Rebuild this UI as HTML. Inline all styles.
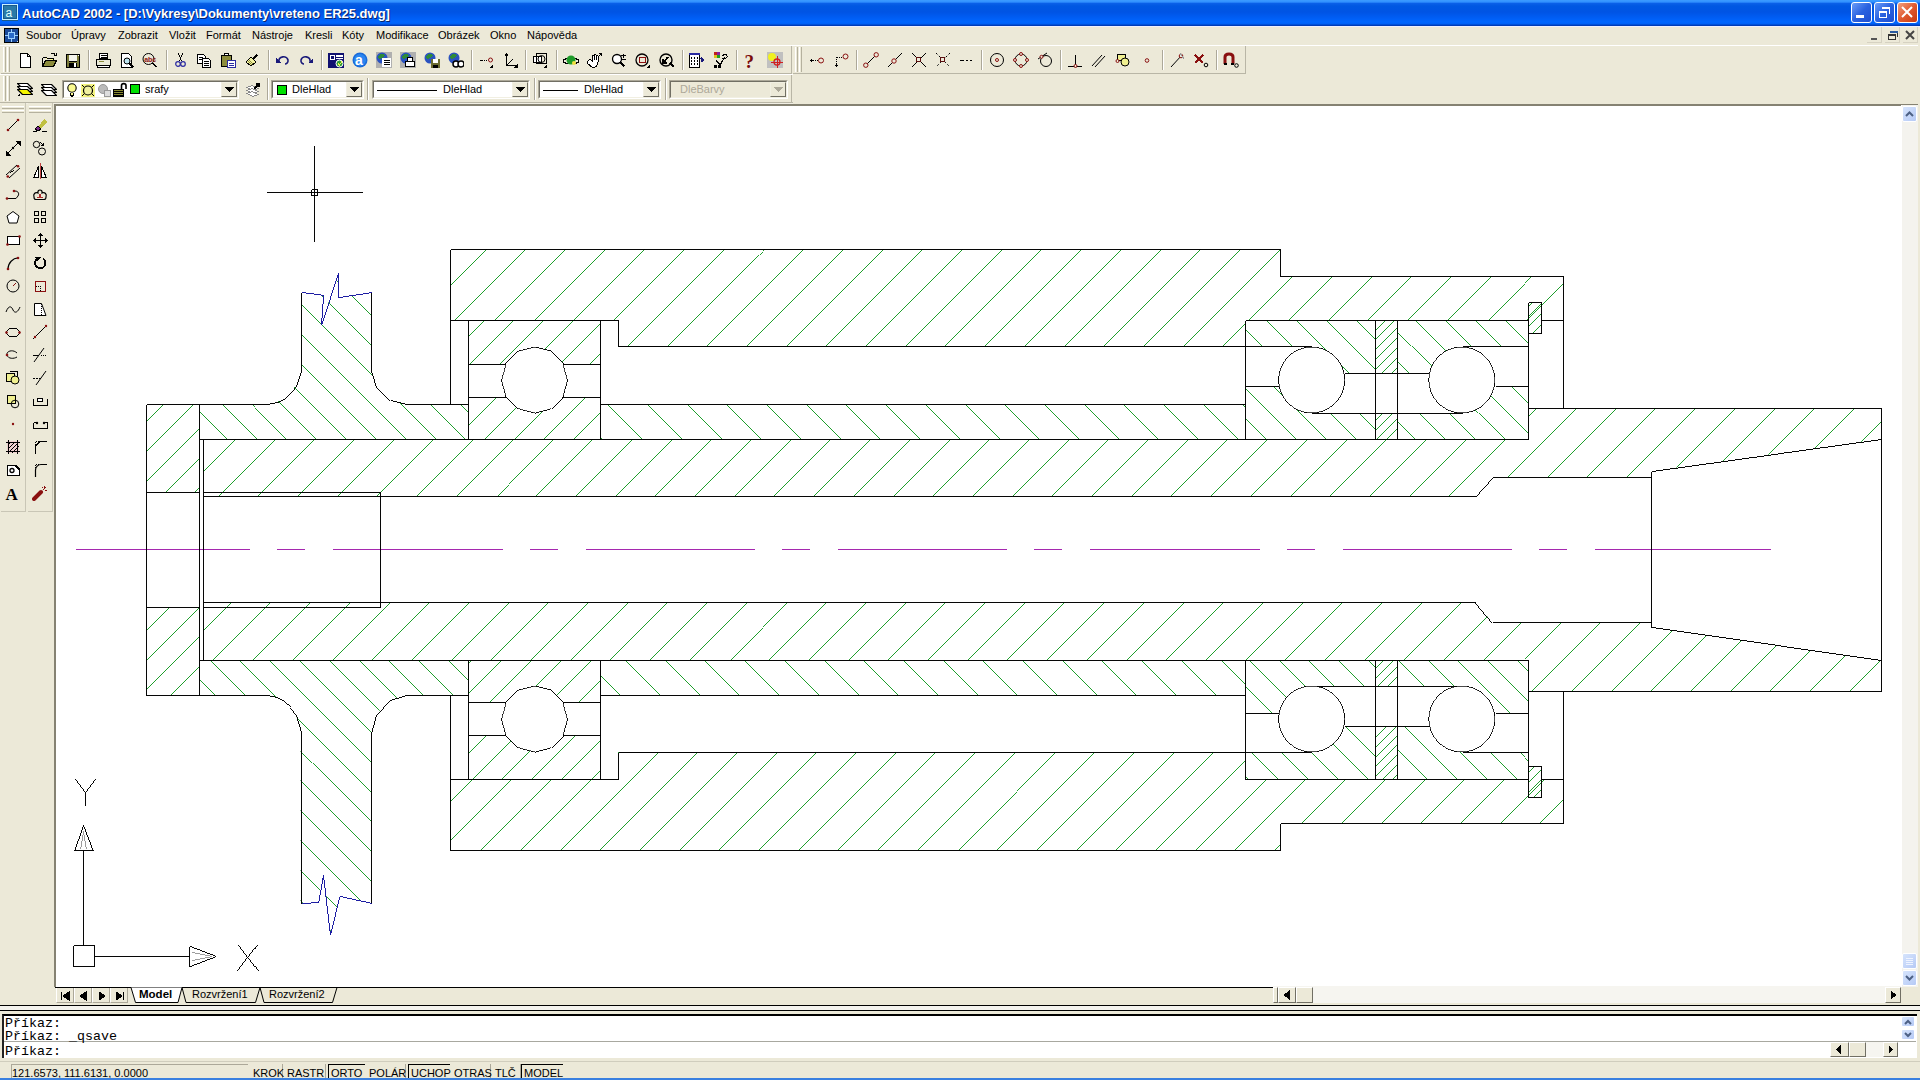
<!DOCTYPE html><html><head><meta charset="utf-8"><style>
*{margin:0;padding:0;box-sizing:border-box}
html,body{width:1920px;height:1080px;overflow:hidden;background:#ece9d8;font-family:"Liberation Sans",sans-serif;position:relative}
.a{position:absolute}
#title{left:0;top:0;width:1920px;height:26px;background:linear-gradient(#3d9cff 0,#3090ff 2px,#0a60e8 3.5px,#0058e2 6px,#0054e4 12px,#005cf2 17px,#0066ff 22px,#0060f4 24px,#0040c0 25px,#0038b0 26px)}
#title .t{left:22px;top:6px;color:#fff;font-weight:bold;font-size:13px;letter-spacing:0px;white-space:nowrap;text-shadow:1px 1px 0 #0a246a}
.mi{top:29px;font-size:11px;color:#000;white-space:nowrap}
.tb{background:#ece9d8}
.sep{width:1px;border-left:1px solid #aca899;border-right:1px solid #fff}
.combo{background:#fff;border:1px solid #7f9db9}
.dd{background:#ece9d8;border-left:1px solid #fff;border-top:1px solid #fff;border-right:1px solid #716f64;border-bottom:1px solid #716f64}
.cmd{font-family:"Liberation Mono",monospace;font-size:13.33px;color:#000;white-space:pre;left:5px}
.sb{top:1065px;height:14px;font-size:11px;color:#000;white-space:nowrap}
</style></head><body><div class="a" style="left:0;top:26px;width:1920px;height:1px;background:#eef0ff"></div><div id="title" class="a"><div class="t a">AutoCAD 2002 - [D:\Vykresy\Dokumenty\vreteno ER25.dwg]</div></div><div class="mi a" style="left:26px">Soubor</div><div class="mi a" style="left:71px">Úpravy</div><div class="mi a" style="left:118px">Zobrazit</div><div class="mi a" style="left:169px">Vložit</div><div class="mi a" style="left:206px">Formát</div><div class="mi a" style="left:252px">Nástroje</div><div class="mi a" style="left:305px">Kresli</div><div class="mi a" style="left:342px">Kóty</div><div class="mi a" style="left:376px">Modifikace</div><div class="mi a" style="left:438px">Obrázek</div><div class="mi a" style="left:490px">Okno</div><div class="mi a" style="left:527px">Nápověda</div><div class="a" style="left:54px;top:104px;width:1866px;height:2px;background:#858272"></div><div class="a" style="left:54px;top:104px;width:2px;height:883px;background:#858272"></div><div class="a" style="left:56px;top:106px;width:1845px;height:881px;background:#fff"></div><div class="a" style="left:0;top:45px;width:1920px;height:1px;background:#fff"></div><div class="a tb" style="left:1px;top:46px;width:791px;height:28px;border-bottom:1px solid #b9b6a6;border-right:1px solid #b9b6a6"></div><div class="a" style="left:3px;top:47px;width:3px;height:25px;border-left:1px solid #fff;border-right:1px solid #b5b19e"></div><div class="a" style="left:7px;top:47px;width:3px;height:25px;border-left:1px solid #fff;border-right:1px solid #b5b19e"></div><svg class="a" style="left:17px;top:52px" width="16" height="16" viewBox="0 0 16 16" shape-rendering="crispEdges"><path d="M3.5 1.5H10.5L13.5 4.5V15.5H3.5Z" stroke="#000" fill="#fff" stroke-width="1" /><path d="M10.5 1.5V4.5H13.5" stroke="#000" fill="none" stroke-width="1" /></svg><svg class="a" style="left:41px;top:52px" width="16" height="16" viewBox="0 0 16 16" shape-rendering="crispEdges"><path d="M1.5 5.5H5.5L6.5 6.5H12.5V8.5" stroke="#000" fill="#ffff99" stroke-width="1" /><path d="M1.5 5.5V14.5H12.5L15.5 8.5H4.5L1.5 14.5" stroke="#000" fill="#8c8c3c" stroke-width="1" /><path d="M9.5 2.5C10.5 0.5 13.5 0.5 14.5 3.5" stroke="#000" fill="none" stroke-width="1" /><path d="M13 3.5H15.5V1" stroke="#000" fill="none" stroke-width="1" /></svg><svg class="a" style="left:65px;top:52px" width="16" height="16" viewBox="0 0 16 16" shape-rendering="crispEdges"><rect x="1" y="2" width="14" height="14" fill="#000"/><rect x="2" y="3" width="12" height="12" fill="#7a7a3a"/><rect x="4" y="3" width="8" height="6" fill="#f4f4ec"/><rect x="4" y="9" width="8" height="1" fill="#000"/><rect x="4" y="11" width="8" height="4" fill="#000"/><rect x="9" y="11" width="2" height="4" fill="#fff"/><rect x="13" y="3" width="1" height="1" fill="#fff"/></svg><div class="a" style="left:88px;top:50px;width:2px;height:20px;border-left:1px solid #aca899;border-right:1px solid #fff"></div><svg class="a" style="left:95px;top:52px" width="16" height="16" viewBox="0 0 16 16" shape-rendering="crispEdges"><path d="M4.5 1.5H12.5V6.5H4.5Z" stroke="#000" fill="#fff" stroke-width="1" /><path d="M1.5 7.5H15.5V13.5H1.5Z" stroke="#000" fill="#ebebd8" stroke-width="1" /><path d="M2.5 13.5V15.5H14.5V13.5" stroke="#000" fill="#fff" stroke-width="1" /><path d="M3.5 9.5H8.5" stroke="#8c8c3c" fill="none" stroke-width="1" /><path d="M5.5 3.5H11.5M5.5 5H11.5" stroke="#000" fill="none" stroke-width="1" /></svg><svg class="a" style="left:119px;top:52px" width="16" height="16" viewBox="0 0 16 16" shape-rendering="crispEdges"><path d="M2.5 1.5H9.5L12.5 4.5V15.5H2.5Z" stroke="#000" fill="#fff" stroke-width="1" /><circle cx="8" cy="9" r="3" stroke="#000" fill="#bfe6f0" stroke-width="1" shape-rendering="auto"/><path d="M10.5 11.5L14.5 15.5" stroke="#000" fill="none" stroke-width="1.5" /></svg><svg class="a" style="left:142px;top:52px" width="16" height="16" viewBox="0 0 16 16" shape-rendering="crispEdges"><circle cx="6.5" cy="7" r="5.5" stroke="#000" fill="none" stroke-width="1" shape-rendering="auto"/><text x="2.2" y="9.5" font-size="7" font-family="Liberation Sans" font-weight="bold" fill="#8a1010">abc</text><path d="M10.5 11L14.5 15" stroke="#000" fill="none" stroke-width="2" /></svg><div class="a" style="left:166px;top:50px;width:2px;height:20px;border-left:1px solid #aca899;border-right:1px solid #fff"></div><svg class="a" style="left:172px;top:52px" width="16" height="16" viewBox="0 0 16 16" shape-rendering="crispEdges"><path d="M6.5 1.5L9.5 9M10.5 1.5L7.5 9" stroke="#000" fill="none" stroke-width="1" /><circle cx="6" cy="12" r="2.3" stroke="#2a2aa0" fill="none" stroke-width="1.2" shape-rendering="auto"/><circle cx="11" cy="12" r="2.3" stroke="#2a2aa0" fill="none" stroke-width="1.2" shape-rendering="auto"/></svg><svg class="a" style="left:196px;top:52px" width="16" height="16" viewBox="0 0 16 16" shape-rendering="crispEdges"><path d="M1.5 2.5H7.5L9.5 4.5V11.5H1.5Z" stroke="#000" fill="#fff" stroke-width="1" /><path d="M6.5 6.5H12.5L14.5 8.5V15.5H6.5Z" stroke="#000" fill="#fff" stroke-width="1" /><path d="M3 5.5H7M3 7.5H7M8 9.5H13M8 11.5H13M8 13.5H13" stroke="#000" fill="none" stroke-width="1" /></svg><svg class="a" style="left:220px;top:52px" width="16" height="16" viewBox="0 0 16 16" shape-rendering="crispEdges"><rect x="1" y="3" width="11" height="12" fill="#8c8c3c"/><path d="M1.5 3.5H11.5V14.5H1.5Z" stroke="#000" fill="none" stroke-width="1" /><rect x="4" y="1" width="5" height="3" fill="#fff"/><path d="M4.5 1.5H8.5V3.5H4.5Z" stroke="#000" fill="none" stroke-width="1" /><path d="M7.5 8.5H15.5V15.5H7.5Z" stroke="#2a2aa0" fill="#fff" stroke-width="1" /><path d="M9 11.5H14M9 13.5H14" stroke="#2a2aa0" fill="none" stroke-width="1" /></svg><svg class="a" style="left:244px;top:52px" width="16" height="16" viewBox="0 0 16 16" shape-rendering="crispEdges"><path d="M2 10L7 5L12 10L7 14Z" stroke="#000" fill="#f0f0a0" stroke-width="1" /><path d="M9 7L13 3" stroke="#000" fill="none" stroke-width="2.5" /><path d="M4 9L8 13M5 8L9 12" stroke="#8c8c3c" fill="none" stroke-width="1" /></svg><div class="a" style="left:268px;top:50px;width:2px;height:20px;border-left:1px solid #aca899;border-right:1px solid #fff"></div><svg class="a" style="left:275px;top:52px" width="16" height="16" viewBox="0 0 16 16" shape-rendering="crispEdges"><path d="M4 10C3 4 12 3 13 8C13.5 11 11 12 10 12" stroke="#1a1a7a" fill="none" stroke-width="1.6" shape-rendering="auto"/><path d="M1 6V11H6Z" stroke="none" fill="#1a1a7a" stroke-width="1" /></svg><svg class="a" style="left:298px;top:52px" width="16" height="16" viewBox="0 0 16 16" shape-rendering="crispEdges"><path d="M12 10C13 4 4 3 3 8C2.5 11 5 12 6 12" stroke="#1a1a7a" fill="none" stroke-width="1.6" shape-rendering="auto"/><path d="M15 6V11H10Z" stroke="none" fill="#1a1a7a" stroke-width="1" /></svg><div class="a" style="left:321px;top:50px;width:2px;height:20px;border-left:1px solid #aca899;border-right:1px solid #fff"></div><svg class="a" style="left:328px;top:52px" width="16" height="16" viewBox="0 0 16 16" shape-rendering="crispEdges"><rect x="0" y="1" width="16" height="15" fill="#101070"/><rect x="2" y="3" width="5" height="5" fill="#fff"/><rect x="3" y="4" width="3" height="3" fill="#101070"/><rect x="8" y="3" width="7" height="2" fill="#fff"/><rect x="8" y="6" width="7" height="1" fill="#fff"/><circle cx="11.5" cy="11.5" r="3.5" stroke="#fff" fill="#2e9a3a" stroke-width="1" shape-rendering="auto"/><path d="M10 11L11.5 13L14 9.5" stroke="#f0f050" fill="none" stroke-width="1" /></svg><svg class="a" style="left:352px;top:52px" width="16" height="16" viewBox="0 0 16 16" shape-rendering="crispEdges"><circle cx="8" cy="8" r="7.5" stroke="none" fill="#1a6ad8" stroke-width="1" shape-rendering="auto"/><circle cx="8" cy="8" r="6" stroke="none" fill="#2a86f0" stroke-width="1" shape-rendering="auto"/><text x="3" y="13" font-size="14" font-family="Liberation Sans" font-weight="bold" fill="#fff">a</text></svg><svg class="a" style="left:376px;top:52px" width="16" height="16" viewBox="0 0 16 16" shape-rendering="crispEdges"><rect x="0" y="0" width="16" height="16" fill="#b0b0b0"/><circle cx="6" cy="6" r="5.5" stroke="none" fill="#2a52c0" stroke-width="1" shape-rendering="auto"/><path d="M2 4C4 1 8 1 9 3C8 6 5 5 4 8C3 7 2 6 2 4Z" stroke="none" fill="#2e8a3a" stroke-width="1" /><rect x="6" y="6" width="9" height="9" fill="#fff"/><path d="M7.5 8.5H13.5M7.5 10.5H13.5M7.5 12.5H13.5" stroke="#000" fill="none" stroke-width="1" /></svg><svg class="a" style="left:400px;top:52px" width="16" height="16" viewBox="0 0 16 16" shape-rendering="crispEdges"><rect x="0" y="0" width="16" height="16" fill="#b0b0b0"/><circle cx="6" cy="6" r="5.5" stroke="none" fill="#2a52c0" stroke-width="1" shape-rendering="auto"/><path d="M2 4C4 1 8 1 9 3C8 6 5 5 4 8C3 7 2 6 2 4Z" stroke="none" fill="#2e8a3a" stroke-width="1" /><path d="M5.5 9.5H14.5V14.5H5.5Z" stroke="#000" fill="#fff" stroke-width="1" /><path d="M7.5 5.5H12.5V9.5H7.5Z" stroke="#000" fill="#fff" stroke-width="1" /></svg><svg class="a" style="left:424px;top:52px" width="16" height="16" viewBox="0 0 16 16" shape-rendering="crispEdges"><rect x="0" y="0" width="16" height="16" fill="#ece9d8"/><circle cx="6" cy="6" r="5.5" stroke="none" fill="#2a52c0" stroke-width="1" shape-rendering="auto"/><path d="M2 4C4 1 8 1 9 3C8 6 5 5 4 8C3 7 2 6 2 4Z" stroke="none" fill="#2e8a3a" stroke-width="1" /><rect x="7" y="7" width="9" height="9" fill="#6b6b2e"/><rect x="9" y="7" width="5" height="4" fill="#fff"/><rect x="9" y="13" width="5" height="3" fill="#000"/></svg><svg class="a" style="left:448px;top:52px" width="16" height="16" viewBox="0 0 16 16" shape-rendering="crispEdges"><rect x="0" y="0" width="16" height="16" fill="#ece9d8"/><circle cx="6" cy="6" r="5.5" stroke="none" fill="#2a52c0" stroke-width="1" shape-rendering="auto"/><path d="M2 4C4 1 8 1 9 3C8 6 5 5 4 8C3 7 2 6 2 4Z" stroke="none" fill="#2e8a3a" stroke-width="1" /><circle cx="8" cy="12" r="3" stroke="#000" fill="#fff" stroke-width="1.5" shape-rendering="auto"/><circle cx="13" cy="12" r="3" stroke="#000" fill="#fff" stroke-width="1.5" shape-rendering="auto"/></svg><div class="a" style="left:471px;top:50px;width:2px;height:20px;border-left:1px solid #aca899;border-right:1px solid #fff"></div><svg class="a" style="left:479px;top:52px" width="16" height="16" viewBox="0 0 16 16" shape-rendering="crispEdges"><path d="M1 8H9" stroke="#000" fill="none" stroke-width="1" stroke-dasharray="1 1"/><path d="M1 8H3" stroke="#000" fill="none" stroke-width="1" /><circle cx="11.5" cy="8" r="2" stroke="#8a1010" fill="none" stroke-width="1" shape-rendering="auto"/><path d="M10 16L14 12V16Z" stroke="none" fill="#000" stroke-width="1" /></svg><svg class="a" style="left:503px;top:52px" width="16" height="16" viewBox="0 0 16 16" shape-rendering="crispEdges"><path d="M3.5 2V13.5H13" stroke="#000" fill="none" stroke-width="1" /><path d="M4 13L10 7" stroke="#000" fill="none" stroke-width="1" /><path d="M10 16L15 11V16Z" stroke="none" fill="#000" stroke-width="1" /><path d="M2 4L3.5 1.5L5 4" stroke="#000" fill="none" stroke-width="1" /></svg><div class="a" style="left:525px;top:50px;width:2px;height:20px;border-left:1px solid #aca899;border-right:1px solid #fff"></div><svg class="a" style="left:532px;top:52px" width="16" height="16" viewBox="0 0 16 16" shape-rendering="crispEdges"><path d="M1.5 4.5H9.5V10.5H1.5Z" stroke="#000" fill="#fff" stroke-width="1.3" /><path d="M4.5 1.5H14.5V11.5H4.5Z" stroke="#000" fill="none" stroke-width="1.3" /><circle cx="9.5" cy="7" r="3.5" stroke="#000" fill="none" stroke-width="1" shape-rendering="auto"/><path d="M11 16L15 12V16Z" stroke="none" fill="#000" stroke-width="1" /></svg><div class="a" style="left:556px;top:50px;width:2px;height:20px;border-left:1px solid #aca899;border-right:1px solid #fff"></div><svg class="a" style="left:563px;top:52px" width="16" height="16" viewBox="0 0 16 16" shape-rendering="crispEdges"><ellipse cx="8" cy="9" rx="7.5" ry="3" stroke="#000" fill="none"/><circle cx="8" cy="8" r="4.5" stroke="none" fill="#1e9a28" stroke-width="1" shape-rendering="auto"/><circle cx="11" cy="11" r="2" stroke="none" fill="#f0e040" stroke-width="1" shape-rendering="auto"/></svg><svg class="a" style="left:586px;top:52px" width="16" height="16" viewBox="0 0 16 16" shape-rendering="crispEdges"><path d="M2 12C1 9 3 7 5 8L6 9V4C6 3 8 3 8 4V8V3C8 2 10 2 10 3V8V4C10 3 12 3 12 4V10C12 14 9 16 6 15Z" stroke="#000" fill="#fff" stroke-width="1" /><path d="M12 5L15 2M13 1H15.5V3.5" stroke="#000" fill="none" stroke-width="1" /></svg><svg class="a" style="left:611px;top:52px" width="16" height="16" viewBox="0 0 16 16" shape-rendering="crispEdges"><circle cx="6" cy="7" r="4.5" stroke="#000" fill="#fff" stroke-width="1.3" shape-rendering="auto"/><path d="M9 10L13.5 14.5" stroke="#000" fill="none" stroke-width="2" /><path d="M12 1.5V6M10 3.5H14.5M10 7.5H14.5" stroke="#000" fill="none" stroke-width="1" /></svg><svg class="a" style="left:635px;top:52px" width="16" height="16" viewBox="0 0 16 16" shape-rendering="crispEdges"><circle cx="7" cy="8" r="6" stroke="#000" fill="none" stroke-width="1.3" shape-rendering="auto"/><path d="M4.5 5.5H10.5V10.5H4.5Z" stroke="#8a1010" fill="none" stroke-width="1" /><path d="M11 16L15 12V16Z" stroke="none" fill="#000" stroke-width="1" /></svg><svg class="a" style="left:659px;top:52px" width="16" height="16" viewBox="0 0 16 16" shape-rendering="crispEdges"><circle cx="7" cy="8" r="6" stroke="#000" fill="none" stroke-width="1.4" shape-rendering="auto"/><path d="M9 5L5 10" stroke="#000" fill="none" stroke-width="2" /><path d="M4 7V11H8" stroke="#000" fill="none" stroke-width="1.2" /><path d="M11 11L15 15" stroke="#000" fill="none" stroke-width="2" /></svg><div class="a" style="left:682px;top:50px;width:2px;height:20px;border-left:1px solid #aca899;border-right:1px solid #fff"></div><svg class="a" style="left:688px;top:52px" width="16" height="16" viewBox="0 0 16 16" shape-rendering="crispEdges"><rect x="1" y="1" width="11" height="15" fill="#fff"/><path d="M1.5 1.5H11.5V15.5H1.5Z" stroke="#000" fill="none" stroke-width="1" /><rect x="1" y="1" width="11" height="2" fill="#2a2aa0"/><path d="M3 5.5H4M6 5.5H7M9 5.5H10M3 8.5H4M6 8.5H7M9 8.5H10M3 11.5H4M6 11.5H7M9 11.5H10" stroke="#000" fill="none" stroke-width="2" /><path d="M13 6L15 8L13 10" stroke="#1a1a7a" fill="none" stroke-width="1.5" /></svg><svg class="a" style="left:713px;top:52px" width="16" height="16" viewBox="0 0 16 16" shape-rendering="crispEdges"><rect x="1" y="0" width="3" height="3" fill="#c02020"/><rect x="4" y="0" width="3" height="3" fill="#8a20a0"/><rect x="1" y="3" width="3" height="3" fill="#e0c020"/><rect x="4" y="3" width="3" height="3" fill="#20a020"/><path d="M3 8L7 13L12 5" stroke="#000" fill="none" stroke-width="1.2" /><rect x="1" y="13" width="3" height="3" fill="#000"/><rect x="5" y="13" width="3" height="3" fill="#000"/><path d="M9 4C11 2 15 2 14 5C13 7 9 7 9 7" stroke="#000" fill="none" stroke-width="1" /></svg><div class="a" style="left:736px;top:50px;width:2px;height:20px;border-left:1px solid #aca899;border-right:1px solid #fff"></div><svg class="a" style="left:742px;top:52px" width="16" height="16" viewBox="0 0 16 16" shape-rendering="crispEdges"><text x="2.5" y="15.5" font-size="19" font-family="Liberation Serif" font-weight="bold" fill="#7a0c0c">?</text></svg><svg class="a" style="left:767px;top:52px" width="16" height="16" viewBox="0 0 16 16" shape-rendering="crispEdges"><rect x="0" y="0" width="16" height="16" fill="#c0c0c0"/><circle cx="5" cy="5" r="4" stroke="none" fill="#f0f020" stroke-width="1" shape-rendering="auto"/><circle cx="10" cy="10" r="3" stroke="#d02020" fill="none" stroke-width="1.3" shape-rendering="auto"/><path d="M10 4V16M4 10H16" stroke="#d02020" fill="none" stroke-width="1" /></svg><div class="a tb" style="left:793px;top:46px;width:453px;height:28px;border-bottom:1px solid #b9b6a6;border-right:1px solid #b9b6a6"></div><div class="a" style="left:795px;top:47px;width:3px;height:25px;border-left:1px solid #fff;border-right:1px solid #b5b19e"></div><div class="a" style="left:799px;top:47px;width:3px;height:25px;border-left:1px solid #fff;border-right:1px solid #b5b19e"></div><svg class="a" style="left:809px;top:52px" width="16" height="16" viewBox="0 0 16 16" shape-rendering="crispEdges"><path d="M2 8H9" stroke="#000" fill="none" stroke-width="1" stroke-dasharray="1 1"/><path d="M1 8.5H4M2.5 7V10" stroke="#000" fill="none" stroke-width="1" /><circle cx="12" cy="8.5" r="2.5" stroke="#8a1010" fill="none" stroke-width="1" shape-rendering="auto"/></svg><svg class="a" style="left:833px;top:52px" width="16" height="16" viewBox="0 0 16 16" shape-rendering="crispEdges"><path d="M3.5 5V14" stroke="#000" fill="none" stroke-width="1" stroke-dasharray="1 1"/><path d="M3.5 5H10" stroke="#000" fill="none" stroke-width="1" stroke-dasharray="1 1"/><circle cx="12.5" cy="4.5" r="2.5" stroke="#8a1010" fill="none" stroke-width="1" shape-rendering="auto"/><path d="M2 13.5H5M3.5 12V15" stroke="#000" fill="none" stroke-width="1" /></svg><div class="a" style="left:856px;top:50px;width:2px;height:20px;border-left:1px solid #aca899;border-right:1px solid #fff"></div><svg class="a" style="left:863px;top:52px" width="16" height="16" viewBox="0 0 16 16" shape-rendering="crispEdges"><path d="M3 13L13 3" stroke="#000" fill="none" stroke-width="1" shape-rendering="auto"/><circle cx="2.8" cy="13.2" r="2.2" stroke="#8a1010" fill="#ece9d8" stroke-width="1" shape-rendering="auto"/><circle cx="13.2" cy="2.8" r="2.2" stroke="#8a1010" fill="#ece9d8" stroke-width="1" shape-rendering="auto"/></svg><svg class="a" style="left:887px;top:52px" width="16" height="16" viewBox="0 0 16 16" shape-rendering="crispEdges"><path d="M1 15L15 1" stroke="#000" fill="none" stroke-width="1" shape-rendering="auto"/><circle cx="7" cy="9" r="2.2" stroke="#8a1010" fill="#ece9d8" stroke-width="1" shape-rendering="auto"/></svg><svg class="a" style="left:911px;top:52px" width="16" height="16" viewBox="0 0 16 16" shape-rendering="crispEdges"><path d="M1 1L15 15M15 1L1 15" stroke="#000" fill="none" stroke-width="1" shape-rendering="auto"/><path d="M5.5 5.5H9.5V9.5H5.5Z" stroke="#5a1010" fill="#ece9d8" stroke-width="1.3" /></svg><svg class="a" style="left:935px;top:52px" width="16" height="16" viewBox="0 0 16 16" shape-rendering="crispEdges"><path d="M1 1L15 15M15 1L1 15" stroke="#000" fill="none" stroke-width="1" shape-rendering="auto" stroke-dasharray="2 2"/><path d="M5.5 5.5H9.5V9.5H5.5Z" stroke="#5a1010" fill="#ece9d8" stroke-width="1.3" /></svg><svg class="a" style="left:959px;top:52px" width="16" height="16" viewBox="0 0 16 16" shape-rendering="crispEdges"><path d="M1 8.5H5M7 8.5H9M11 8.5H13" stroke="#000" fill="none" stroke-width="1" /></svg><div class="a" style="left:981px;top:50px;width:2px;height:20px;border-left:1px solid #aca899;border-right:1px solid #fff"></div><svg class="a" style="left:989px;top:52px" width="16" height="16" viewBox="0 0 16 16" shape-rendering="crispEdges"><circle cx="8" cy="8" r="6.5" stroke="#000" fill="none" stroke-width="1" shape-rendering="auto"/><circle cx="8" cy="8" r="1.5" stroke="#8a1010" fill="none" stroke-width="1" shape-rendering="auto"/></svg><svg class="a" style="left:1013px;top:52px" width="16" height="16" viewBox="0 0 16 16" shape-rendering="crispEdges"><circle cx="8" cy="8" r="6" stroke="#000" fill="none" stroke-width="1" shape-rendering="auto"/><circle cx="8" cy="2" r="1.5" stroke="#8a1010" fill="#ece9d8" stroke-width="1" shape-rendering="auto"/><circle cx="8" cy="14" r="1.5" stroke="#8a1010" fill="#ece9d8" stroke-width="1" shape-rendering="auto"/><circle cx="2" cy="8" r="1.5" stroke="#8a1010" fill="#ece9d8" stroke-width="1" shape-rendering="auto"/><circle cx="14" cy="8" r="1.5" stroke="#8a1010" fill="#ece9d8" stroke-width="1" shape-rendering="auto"/></svg><svg class="a" style="left:1037px;top:52px" width="16" height="16" viewBox="0 0 16 16" shape-rendering="crispEdges"><circle cx="9" cy="9" r="5.5" stroke="#000" fill="none" stroke-width="1" shape-rendering="auto"/><path d="M1 7L10 1" stroke="#000" fill="none" stroke-width="1" shape-rendering="auto"/><circle cx="4.5" cy="4.8" r="1.5" stroke="#8a1010" fill="#ece9d8" stroke-width="1" shape-rendering="auto"/></svg><div class="a" style="left:1060px;top:50px;width:2px;height:20px;border-left:1px solid #aca899;border-right:1px solid #fff"></div><svg class="a" style="left:1067px;top:52px" width="16" height="16" viewBox="0 0 16 16" shape-rendering="crispEdges"><path d="M1 14.5H15M8.5 3V14" stroke="#000" fill="none" stroke-width="1" /><circle cx="8.5" cy="14" r="1.5" stroke="#8a1010" fill="#ece9d8" stroke-width="1" shape-rendering="auto"/></svg><svg class="a" style="left:1091px;top:52px" width="16" height="16" viewBox="0 0 16 16" shape-rendering="crispEdges"><path d="M1 14L11 3M4 15L14 4" stroke="#000" fill="none" stroke-width="1" shape-rendering="auto"/></svg><svg class="a" style="left:1115px;top:52px" width="16" height="16" viewBox="0 0 16 16" shape-rendering="crispEdges"><rect x="2" y="2" width="9" height="7" fill="#f0f090"/><path d="M2.5 2.5H10.5V8.5H2.5Z" stroke="#000" fill="none" stroke-width="1" /><circle cx="10" cy="10" r="4" stroke="#000" fill="#f0f090" stroke-width="1" shape-rendering="auto"/><circle cx="2.5" cy="9" r="1.5" stroke="#8a1010" fill="#ece9d8" stroke-width="1" shape-rendering="auto"/></svg><svg class="a" style="left:1139px;top:52px" width="16" height="16" viewBox="0 0 16 16" shape-rendering="crispEdges"><circle cx="8" cy="8.5" r="1.8" stroke="#8a1010" fill="none" stroke-width="1" shape-rendering="auto"/></svg><div class="a" style="left:1162px;top:50px;width:2px;height:20px;border-left:1px solid #aca899;border-right:1px solid #fff"></div><svg class="a" style="left:1170px;top:52px" width="16" height="16" viewBox="0 0 16 16" shape-rendering="crispEdges"><path d="M1 15L12 3" stroke="#000" fill="none" stroke-width="1" shape-rendering="auto"/><circle cx="11" cy="4" r="1.8" stroke="#8a1010" fill="#ece9d8" stroke-width="1" shape-rendering="auto"/><path d="M10 1L14 7" stroke="#999" fill="none" stroke-width="1" /></svg><svg class="a" style="left:1193px;top:52px" width="16" height="16" viewBox="0 0 16 16" shape-rendering="crispEdges"><path d="M2 3L10 11M10 3L2 11" stroke="#8a1010" fill="none" stroke-width="2.5" /><circle cx="13" cy="13" r="1.8" stroke="#000" fill="none" stroke-width="1" shape-rendering="auto"/></svg><div class="a" style="left:1216px;top:50px;width:2px;height:20px;border-left:1px solid #aca899;border-right:1px solid #fff"></div><svg class="a" style="left:1223px;top:52px" width="16" height="16" viewBox="0 0 16 16" shape-rendering="crispEdges"><path d="M2 12V5C2 1 10 1 10 5V12" stroke="#8a1010" fill="none" stroke-width="3" shape-rendering="auto"/><rect x="1" y="11" width="3" height="2" fill="#000"/><rect x="8" y="11" width="3" height="2" fill="#000"/><circle cx="13.5" cy="13.5" r="1.8" stroke="#000" fill="none" stroke-width="1" shape-rendering="auto"/></svg><div class="a" style="left:0;top:74px;width:793px;height:1px;background:#fff"></div><div class="a" style="left:0;top:102px;width:793px;height:1px;background:#b9b6a6"></div><div class="a tb" style="left:1px;top:75px;width:791px;height:27px;border-right:1px solid #b9b6a6"></div><div class="a" style="left:3px;top:76px;width:3px;height:25px;border-left:1px solid #fff;border-right:1px solid #b5b19e"></div><div class="a" style="left:7px;top:76px;width:3px;height:25px;border-left:1px solid #fff;border-right:1px solid #b5b19e"></div><svg class="a" style="left:17px;top:81px" width="16" height="16" viewBox="0 0 16 16" shape-rendering="crispEdges"><path d="M0.5 2.5 H10.5 L15.5 7.5 H5.5Z" stroke="#000" fill="#fff" stroke-width="1.2" shape-rendering="auto" stroke-linejoin="round"/><path d="M0.5 5.5 H10.5 L15.5 10.5 H5.5Z" stroke="#000" fill="#fff" stroke-width="1.2" shape-rendering="auto" stroke-linejoin="round"/><path d="M0.5 8.5 H10.5 L15.5 13.5 H5.5Z" stroke="#000" fill="#f4f400" stroke-width="1.2" shape-rendering="auto" stroke-linejoin="round"/><path d="M1 15L2.5 12.5L3.5 15Z" stroke="none" fill="#000" stroke-width="1" /></svg><svg class="a" style="left:41px;top:81px" width="16" height="16" viewBox="0 0 16 16" shape-rendering="crispEdges"><path d="M0.5 3.5 H10.5 L15.5 8.5 H5.5Z" stroke="#000" fill="#fff" stroke-width="1.2" shape-rendering="auto" stroke-linejoin="round"/><path d="M0.5 6.5 H10.5 L15.5 11.5 H5.5Z" stroke="#000" fill="#fff" stroke-width="1.2" shape-rendering="auto" stroke-linejoin="round"/><path d="M0.5 9.5 H10.5 L15.5 14.5 H5.5Z" stroke="#000" fill="#fff" stroke-width="1.2" shape-rendering="auto" stroke-linejoin="round"/></svg><div class="a" style="left:62px;top:80px;width:177px;height:19px;border-top:1px solid #aca899;border-left:1px solid #aca899;border-right:1px solid #fff;border-bottom:1px solid #fff"></div><div class="a" style="left:63px;top:81px;width:175px;height:17px;background:#fff;border-top:1px solid #716f64;border-left:1px solid #716f64;border-right:1px solid #f1efe2;border-bottom:1px solid #f1efe2"></div><svg class="a" style="left:64px;top:82px" width="16" height="16" viewBox="0 0 16 16" shape-rendering="crispEdges"><circle cx="8" cy="6" r="4.2" stroke="#000" fill="#fafa90" stroke-width="1.1" shape-rendering="auto"/><path d="M6.5 10.5V13.5H9.5V10.5" stroke="#000" fill="#fafa90" stroke-width="1" /><rect x="7" y="14" width="2" height="1" fill="#000"/></svg><svg class="a" style="left:80px;top:82px" width="16" height="16" viewBox="0 0 16 16" shape-rendering="crispEdges"><rect x="1" y="2" width="14" height="13" fill="#f4f480"/><circle cx="8" cy="8.5" r="4.5" stroke="#000" fill="#f0f0a0" stroke-width="1.2" shape-rendering="auto"/><path d="M2 3L4 5M14 3L12 5M2 14L4 12M14 14L12 12" stroke="#000" fill="none" stroke-width="1" /></svg><svg class="a" style="left:96px;top:82px" width="16" height="16" viewBox="0 0 16 16" shape-rendering="crispEdges"><circle cx="7" cy="7" r="4.5" stroke="#999" fill="#bbb" stroke-width="1" shape-rendering="auto"/><path d="M8.5 8.5H14.5V14.5H8.5Z" stroke="#999" fill="#ddd" stroke-width="1" /></svg><svg class="a" style="left:113px;top:82px" width="16" height="16" viewBox="0 0 16 16" shape-rendering="crispEdges"><rect x="0" y="7" width="11" height="8" fill="#000"/><rect x="1" y="8" width="9" height="1" fill="#8a8a30"/><rect x="1" y="10" width="9" height="1" fill="#8a8a30"/><rect x="1" y="12" width="9" height="1" fill="#8a8a30"/><path d="M8.5 7V3.5C8.5 1 13 1 13 3.5V7" stroke="#000" fill="none" stroke-width="1.6" shape-rendering="auto"/></svg><div class="a" style="left:130px;top:84px;width:10px;height:10px;background:#00e000;border:1px solid #000"></div><div class="a" style="left:145px;top:83px;font-size:11px">srafy</div><div class="a" style="left:221px;top:82px;width:16px;height:15px;background:#ece9d8;border-top:1px solid #f1efe2;border-left:1px solid #f1efe2;border-right:1px solid #716f64;border-bottom:1px solid #716f64"></div><svg class="a" style="left:224px;top:86px" width="11" height="7" viewBox="0 0 11 7" shape-rendering="crispEdges"><path d="M1 1H10L5.5 6Z" fill="#000"/></svg><svg class="a" style="left:245px;top:81px" width="16" height="16" viewBox="0 0 16 16" shape-rendering="crispEdges"><path d="M2 6.5L7 4.5L13 7.5L8 9.5Z" stroke="#888" fill="#fff" stroke-width="1" /><path d="M2 9.5L7 7.5L13 10.5L8 12.5Z" stroke="#888" fill="#fff" stroke-width="1" /><path d="M2 12.5L7 10.5L13 13.5L8 15.5Z" stroke="#888" fill="#fff" stroke-width="1" /><path d="M9 8L14 3M11 3H14V6" stroke="#000" fill="none" stroke-width="1.5" /></svg><div class="a" style="left:267px;top:78px;width:2px;height:22px;border-left:1px solid #aca899;border-right:1px solid #fff"></div><div class="a" style="left:271px;top:80px;width:93px;height:19px;border-top:1px solid #aca899;border-left:1px solid #aca899;border-right:1px solid #fff;border-bottom:1px solid #fff"></div><div class="a" style="left:272px;top:81px;width:91px;height:17px;background:#fff;border-top:1px solid #716f64;border-left:1px solid #716f64;border-right:1px solid #f1efe2;border-bottom:1px solid #f1efe2"></div><div class="a" style="left:277px;top:85px;width:10px;height:10px;background:#00e000;border:1px solid #000"></div><div class="a" style="left:292px;top:83px;font-size:11px">DleHlad</div><div class="a" style="left:346px;top:82px;width:16px;height:15px;background:#ece9d8;border-top:1px solid #f1efe2;border-left:1px solid #f1efe2;border-right:1px solid #716f64;border-bottom:1px solid #716f64"></div><svg class="a" style="left:349px;top:86px" width="11" height="7" viewBox="0 0 11 7" shape-rendering="crispEdges"><path d="M1 1H10L5.5 6Z" fill="#000"/></svg><div class="a" style="left:367px;top:78px;width:2px;height:22px;border-left:1px solid #aca899;border-right:1px solid #fff"></div><div class="a" style="left:372px;top:80px;width:158px;height:19px;border-top:1px solid #aca899;border-left:1px solid #aca899;border-right:1px solid #fff;border-bottom:1px solid #fff"></div><div class="a" style="left:373px;top:81px;width:156px;height:17px;background:#fff;border-top:1px solid #716f64;border-left:1px solid #716f64;border-right:1px solid #f1efe2;border-bottom:1px solid #f1efe2"></div><div class="a" style="left:377px;top:90px;width:60px;height:1px;background:#000"></div><div class="a" style="left:443px;top:83px;font-size:11px">DleHlad</div><div class="a" style="left:512px;top:82px;width:16px;height:15px;background:#ece9d8;border-top:1px solid #f1efe2;border-left:1px solid #f1efe2;border-right:1px solid #716f64;border-bottom:1px solid #716f64"></div><svg class="a" style="left:515px;top:86px" width="11" height="7" viewBox="0 0 11 7" shape-rendering="crispEdges"><path d="M1 1H10L5.5 6Z" fill="#000"/></svg><div class="a" style="left:534px;top:78px;width:2px;height:22px;border-left:1px solid #aca899;border-right:1px solid #fff"></div><div class="a" style="left:538px;top:80px;width:123px;height:19px;border-top:1px solid #aca899;border-left:1px solid #aca899;border-right:1px solid #fff;border-bottom:1px solid #fff"></div><div class="a" style="left:539px;top:81px;width:121px;height:17px;background:#fff;border-top:1px solid #716f64;border-left:1px solid #716f64;border-right:1px solid #f1efe2;border-bottom:1px solid #f1efe2"></div><div class="a" style="left:543px;top:90px;width:35px;height:1px;background:#000"></div><div class="a" style="left:584px;top:83px;font-size:11px">DleHlad</div><div class="a" style="left:643px;top:82px;width:16px;height:15px;background:#ece9d8;border-top:1px solid #f1efe2;border-left:1px solid #f1efe2;border-right:1px solid #716f64;border-bottom:1px solid #716f64"></div><svg class="a" style="left:646px;top:86px" width="11" height="7" viewBox="0 0 11 7" shape-rendering="crispEdges"><path d="M1 1H10L5.5 6Z" fill="#000"/></svg><div class="a" style="left:665px;top:78px;width:2px;height:22px;border-left:1px solid #aca899;border-right:1px solid #fff"></div><div class="a" style="left:669px;top:80px;width:119px;height:19px;border-top:1px solid #aca899;border-left:1px solid #aca899;border-right:1px solid #fff;border-bottom:1px solid #fff"></div><div class="a" style="left:670px;top:81px;width:117px;height:17px;background:#ece9d8;border-top:1px solid #716f64;border-left:1px solid #716f64;border-right:1px solid #f1efe2;border-bottom:1px solid #f1efe2"></div><div class="a" style="left:680px;top:83px;font-size:11px;color:#aca899">DleBarvy</div><div class="a" style="left:770px;top:82px;width:16px;height:15px;background:#ece9d8;border-top:1px solid #f1efe2;border-left:1px solid #f1efe2;border-right:1px solid #716f64;border-bottom:1px solid #716f64"></div><svg class="a" style="left:773px;top:86px" width="11" height="7" viewBox="0 0 11 7" shape-rendering="crispEdges"><path d="M1 1H10L5.5 6Z" fill="#aca899"/></svg><div class="a" style="left:0;top:103px;width:793px;height:1px;background:#f1efe4"></div><div class="a tb" style="left:1px;top:103px;width:25px;height:409px;border-right:1px solid #c9c6b6;border-bottom:1px solid #c9c6b6"></div><div class="a" style="left:2px;top:106px;width:22px;height:3px;border-top:1px solid #fff;border-bottom:1px solid #b5b19e"></div><div class="a" style="left:2px;top:110px;width:22px;height:3px;border-top:1px solid #fff;border-bottom:1px solid #b5b19e"></div><svg class="a" style="left:5px;top:117px" width="16" height="16" viewBox="0 0 16 16" shape-rendering="crispEdges"><path d="M3 13L13 3" stroke="#000" fill="none" stroke-width="1" shape-rendering="auto"/><circle cx="3" cy="13" r="1.3" stroke="none" fill="#8a1010" stroke-width="1" shape-rendering="auto"/><circle cx="13" cy="3" r="1.3" stroke="none" fill="#8a1010" stroke-width="1" shape-rendering="auto"/></svg><svg class="a" style="left:5px;top:140px" width="16" height="16" viewBox="0 0 16 16" shape-rendering="crispEdges"><path d="M1 15L15 1" stroke="#000" fill="none" stroke-width="1" shape-rendering="auto"/><path d="M1 15L1 11L5 15Z M15 1V5L11 1Z" stroke="#000" fill="#000" stroke-width="1" /><circle cx="8" cy="8" r="1.2" stroke="none" fill="#000" stroke-width="1" shape-rendering="auto"/></svg><svg class="a" style="left:5px;top:163px" width="16" height="16" viewBox="0 0 16 16" shape-rendering="crispEdges"><path d="M1 12L12 2M4 15L15 5" stroke="#000" fill="none" stroke-width="1" shape-rendering="auto"/><path d="M5 10L10 6" stroke="#000" fill="none" stroke-width="1" stroke-dasharray="1 1"/><circle cx="2.8" cy="13.5" r="1.3" stroke="none" fill="#8a1010" stroke-width="1" shape-rendering="auto"/><circle cx="13" cy="3.3" r="1.3" stroke="none" fill="#8a1010" stroke-width="1" shape-rendering="auto"/></svg><svg class="a" style="left:5px;top:186px" width="16" height="16" viewBox="0 0 16 16" shape-rendering="crispEdges"><path d="M2 12.5H11M9 5.5C12 4 15 7 13 10L11 12.5" stroke="#000" fill="none" stroke-width="1" shape-rendering="auto"/><circle cx="2" cy="12.5" r="1.3" stroke="none" fill="#8a1010" stroke-width="1" shape-rendering="auto"/><circle cx="9" cy="5" r="1.3" stroke="none" fill="#8a1010" stroke-width="1" shape-rendering="auto"/></svg><svg class="a" style="left:5px;top:209px" width="16" height="16" viewBox="0 0 16 16" shape-rendering="crispEdges"><path d="M8 2.5L14 7L12 14H4L2 7Z" stroke="#000" fill="#fff" stroke-width="1" shape-rendering="auto"/></svg><svg class="a" style="left:5px;top:232px" width="16" height="16" viewBox="0 0 16 16" shape-rendering="crispEdges"><path d="M2.5 4.5H14.5V12.5H2.5Z" stroke="#000" fill="#fff" stroke-width="1" /><circle cx="2.5" cy="12.5" r="1.3" stroke="none" fill="#8a1010" stroke-width="1" shape-rendering="auto"/><circle cx="14.5" cy="4.5" r="1.3" stroke="none" fill="#8a1010" stroke-width="1" shape-rendering="auto"/></svg><svg class="a" style="left:5px;top:255px" width="16" height="16" viewBox="0 0 16 16" shape-rendering="crispEdges"><path d="M3 14C3 8 8 3 13 3" stroke="#000" fill="none" stroke-width="1.1" shape-rendering="auto"/><circle cx="3" cy="14" r="1.3" stroke="none" fill="#8a1010" stroke-width="1" shape-rendering="auto"/><circle cx="13" cy="3" r="1.3" stroke="none" fill="#8a1010" stroke-width="1" shape-rendering="auto"/></svg><svg class="a" style="left:5px;top:278px" width="16" height="16" viewBox="0 0 16 16" shape-rendering="crispEdges"><circle cx="8" cy="8" r="6" stroke="#000" fill="none" stroke-width="1" shape-rendering="auto"/><path d="M8 8L11 5" stroke="#8a1010" fill="none" stroke-width="1" shape-rendering="auto"/></svg><svg class="a" style="left:5px;top:301px" width="16" height="16" viewBox="0 0 16 16" shape-rendering="crispEdges"><path d="M1 11C4 3 7 6 8 9C10 13 13 11 15 6" stroke="#000" fill="none" stroke-width="1" shape-rendering="auto"/></svg><svg class="a" style="left:5px;top:324px" width="16" height="16" viewBox="0 0 16 16" shape-rendering="crispEdges"><ellipse cx="8" cy="8.5" rx="6.5" ry="4.5" stroke="#000" fill="none"/><circle cx="1.5" cy="8.5" r="1.3" stroke="none" fill="#8a1010" stroke-width="1" shape-rendering="auto"/><circle cx="14.5" cy="8.5" r="1.3" stroke="none" fill="#8a1010" stroke-width="1" shape-rendering="auto"/></svg><svg class="a" style="left:5px;top:347px" width="16" height="16" viewBox="0 0 16 16" shape-rendering="crispEdges"><path d="M12 6C8 2 1 4 2 8C3 12 9 12 12 10" stroke="#000" fill="none" stroke-width="1" shape-rendering="auto"/><circle cx="2" cy="8" r="1.3" stroke="none" fill="#8a1010" stroke-width="1" shape-rendering="auto"/></svg><svg class="a" style="left:5px;top:370px" width="16" height="16" viewBox="0 0 16 16" shape-rendering="crispEdges"><path d="M1.5 3.5H9.5V11.5H1.5Z" stroke="#000" fill="#f0f090" stroke-width="1" /><path d="M4.5 1.5L12 1.5V9" stroke="#000" fill="none" stroke-width="1" /><circle cx="10" cy="10" r="4" stroke="#000" fill="#f0f090" stroke-width="1" shape-rendering="auto"/></svg><svg class="a" style="left:5px;top:393px" width="16" height="16" viewBox="0 0 16 16" shape-rendering="crispEdges"><path d="M2.5 2.5H10.5V10.5H2.5Z" stroke="#000" fill="#f0f090" stroke-width="1" /><circle cx="10" cy="11" r="3.8" stroke="#000" fill="none" stroke-width="1" shape-rendering="auto"/></svg><svg class="a" style="left:5px;top:416px" width="16" height="16" viewBox="0 0 16 16" shape-rendering="crispEdges"><circle cx="8" cy="8" r="1.2" stroke="none" fill="#8a1010" stroke-width="1" shape-rendering="auto"/></svg><svg class="a" style="left:5px;top:439px" width="16" height="16" viewBox="0 0 16 16" shape-rendering="crispEdges"><rect x="2" y="2" width="12" height="12" fill="#f0d0d0"/><path d="M3 6L6 3M3 10L10 3M3 14L14 3M7 14L14 7" stroke="#000" fill="none" stroke-width="1" shape-rendering="auto"/><path d="M1 3.5H15M1 12.5H15M3.5 1V15M12.5 1V15" stroke="#000" fill="none" stroke-width="1.2" /></svg><svg class="a" style="left:5px;top:462px" width="16" height="16" viewBox="0 0 16 16" shape-rendering="crispEdges"><path d="M2.5 3.5H10.5L14.5 7.5V13.5H2.5Z" stroke="#000" fill="#fff" stroke-width="1.5" /><circle cx="7" cy="8.5" r="2" stroke="#000" fill="none" stroke-width="1.3" shape-rendering="auto"/></svg><svg class="a" style="left:5px;top:485px" width="16" height="16" viewBox="0 0 16 16" shape-rendering="crispEdges"><text x="0.5" y="15" font-size="17" font-family="Liberation Serif" font-weight="bold" fill="#000">A</text></svg><div class="a tb" style="left:28px;top:103px;width:25px;height:409px;border-right:1px solid #c9c6b6;border-bottom:1px solid #c9c6b6"></div><div class="a" style="left:29px;top:106px;width:22px;height:3px;border-top:1px solid #fff;border-bottom:1px solid #b5b19e"></div><div class="a" style="left:29px;top:110px;width:22px;height:3px;border-top:1px solid #fff;border-bottom:1px solid #b5b19e"></div><svg class="a" style="left:32px;top:117px" width="16" height="16" viewBox="0 0 16 16" shape-rendering="crispEdges"><path d="M6 10L12 2L15 5L9 12Z" stroke="none" fill="#c0c040" stroke-width="1" /><path d="M3 12L6 9L9 12L6 14Z" stroke="#000" fill="#7a2a8a" stroke-width="1" /><path d="M1 14.5H5M10 14.5H15" stroke="#000" fill="none" stroke-width="1.5" /></svg><svg class="a" style="left:32px;top:140px" width="16" height="16" viewBox="0 0 16 16" shape-rendering="crispEdges"><circle cx="4.5" cy="4.5" r="3.2" stroke="#000" fill="none" stroke-width="1" shape-rendering="auto"/><circle cx="10" cy="11.5" r="3.5" stroke="#000" fill="none" stroke-width="1" shape-rendering="auto"/><path d="M8 2L11 5M11 3V5H9" stroke="#000" fill="none" stroke-width="1" /></svg><svg class="a" style="left:32px;top:163px" width="16" height="16" viewBox="0 0 16 16" shape-rendering="crispEdges"><path d="M8 0V16" stroke="#c04040" fill="none" stroke-width="1" /><path d="M6.5 3L2 14H6.5Z" stroke="#000" fill="#fff" stroke-width="1" /><path d="M9.5 3L14 14H9.5Z" stroke="#000" fill="#fff" stroke-width="1" /></svg><svg class="a" style="left:32px;top:186px" width="16" height="16" viewBox="0 0 16 16" shape-rendering="crispEdges"><path d="M2 11C1 8 3 6 6 7C5 3 11 3 10 7C13 6 15 8 14 11C14 13 13 13.5 12 13.5H4C3 13.5 2 13 2 11Z" stroke="#000" fill="none" stroke-width="1.2" shape-rendering="auto"/><path d="M5 11.5H11M8 8V11.5" stroke="#b03030" fill="none" stroke-width="1.2" /></svg><svg class="a" style="left:32px;top:209px" width="16" height="16" viewBox="0 0 16 16" shape-rendering="crispEdges"><path d="M2.5 2.5H6.5V6.5H2.5ZM9.5 2.5H13.5V6.5H9.5ZM2.5 9.5H6.5V13.5H2.5ZM9.5 9.5H13.5V13.5H9.5Z" stroke="#000" fill="none" stroke-width="1.2" /></svg><svg class="a" style="left:32px;top:232px" width="16" height="16" viewBox="0 0 16 16" shape-rendering="crispEdges"><path d="M8.5 2V15M2 8.5H15" stroke="#000" fill="none" stroke-width="1" /><path d="M8.5 1L6 4H11ZM8.5 16L6 13H11ZM1 8.5L4 6V11ZM16 8.5L13 6V11Z" stroke="none" fill="#000" stroke-width="1" /></svg><svg class="a" style="left:32px;top:255px" width="16" height="16" viewBox="0 0 16 16" shape-rendering="crispEdges"><path d="M11 3.5A5.2 5.2 0 1 1 5 4" stroke="#000" fill="none" stroke-width="2"/><path d="M3 1.5L8.5 2.5L5 7Z" stroke="none" fill="#000" stroke-width="1" /></svg><svg class="a" style="left:32px;top:278px" width="16" height="16" viewBox="0 0 16 16" shape-rendering="crispEdges"><path d="M3.5 3.5H13.5V13.5H3.5Z" stroke="#8a1010" fill="none" stroke-width="1" /><path d="M3.5 8.5H8.5V13.5" stroke="#000" fill="none" stroke-width="1" stroke-dasharray="1 1"/></svg><svg class="a" style="left:32px;top:301px" width="16" height="16" viewBox="0 0 16 16" shape-rendering="crispEdges"><path d="M2.5 2.5H9.5L14 14.5H2.5Z" stroke="#000" fill="#fff" stroke-width="1" shape-rendering="auto"/><path d="M9.5 3V14" stroke="#000" fill="none" stroke-width="1" stroke-dasharray="1 1"/></svg><svg class="a" style="left:32px;top:324px" width="16" height="16" viewBox="0 0 16 16" shape-rendering="crispEdges"><path d="M1 15L15 1" stroke="#000" fill="none" stroke-width="1" shape-rendering="auto"/><path d="M10 6L15 1" stroke="#000" fill="none" stroke-width="1" /><circle cx="3" cy="13" r="1.2" stroke="none" fill="#8a1010" stroke-width="1" shape-rendering="auto"/><circle cx="14" cy="2" r="1.2" stroke="none" fill="#8a1010" stroke-width="1" shape-rendering="auto"/></svg><svg class="a" style="left:32px;top:347px" width="16" height="16" viewBox="0 0 16 16" shape-rendering="crispEdges"><path d="M2 15L12 1" stroke="#000" fill="none" stroke-width="1" shape-rendering="auto"/><path d="M1 8.5H7" stroke="#000" fill="none" stroke-width="1.2" /><path d="M9 8.5H15" stroke="#000" fill="none" stroke-width="1" stroke-dasharray="1 1"/></svg><svg class="a" style="left:32px;top:370px" width="16" height="16" viewBox="0 0 16 16" shape-rendering="crispEdges"><path d="M4 15L14 1" stroke="#000" fill="none" stroke-width="1" shape-rendering="auto"/><path d="M1 8.5H3M4 8.5H6" stroke="#000" fill="none" stroke-width="1" /><path d="M7 8.5H9" stroke="#000" fill="none" stroke-width="1" /></svg><svg class="a" style="left:32px;top:393px" width="16" height="16" viewBox="0 0 16 16" shape-rendering="crispEdges"><path d="M1 5.5V12.5H15V5.5" stroke="#000" fill="none" stroke-width="1" /><path d="M5.5 5.5H10.5V8.5H5.5Z" stroke="#000" fill="#fff" stroke-width="1" /></svg><svg class="a" style="left:32px;top:416px" width="16" height="16" viewBox="0 0 16 16" shape-rendering="crispEdges"><path d="M1.5 6.5V12.5H15.5V6.5" stroke="#000" fill="none" stroke-width="1" /><path d="M1.5 6.5H4.5M12.5 6.5H15.5" stroke="#000" fill="none" stroke-width="1" /><circle cx="5" cy="7" r="1.2" stroke="none" fill="#000" stroke-width="1" shape-rendering="auto"/><circle cx="12" cy="7" r="1.2" stroke="none" fill="#000" stroke-width="1" shape-rendering="auto"/></svg><svg class="a" style="left:32px;top:439px" width="16" height="16" viewBox="0 0 16 16" shape-rendering="crispEdges"><path d="M3.5 15V7L8 2.5H15" stroke="#000" fill="none" stroke-width="1.2" /><path d="M3.5 6V2.5H7" stroke="#000" fill="none" stroke-width="1" stroke-dasharray="1 1"/></svg><svg class="a" style="left:32px;top:462px" width="16" height="16" viewBox="0 0 16 16" shape-rendering="crispEdges"><path d="M3.5 15V8C3.5 5 6 2.5 9 2.5H15" stroke="#000" fill="none" stroke-width="1.2" shape-rendering="auto"/><path d="M3.5 6V2.5H7" stroke="#000" fill="none" stroke-width="1" stroke-dasharray="1 1"/></svg><svg class="a" style="left:32px;top:485px" width="16" height="16" viewBox="0 0 16 16" shape-rendering="crispEdges"><path d="M2 14L9 7" stroke="#8a1010" fill="none" stroke-width="4" stroke-linecap="round" shape-rendering="auto"/><path d="M11 5L14 2M12 1V3M15 5H13M10 2L11 3M14 6L13 5" stroke="#8a1010" fill="none" stroke-width="1" /></svg><svg class="a" style="left:0;top:0" width="1920" height="1080" viewBox="0 0 1920 1080" shape-rendering="crispEdges"><defs><clipPath id="c1"><polygon points="450,249 1280,249 1280,276 1563,276 1563,320 1245,320 1245,346 618,346 618,320 450,320"/></clipPath><clipPath id="c2"><polygon points="450,850 1280,850 1280,823 1563,823 1563,779 1245,779 1245,752 618,752 618,779 450,779"/></clipPath><clipPath id="c3"><polygon points="146,404 199,404 199,492 146,492"/></clipPath><clipPath id="c4"><polygon points="146,695 199,695 199,607 146,607"/></clipPath><clipPath id="c5"><polygon points="199,404 266,404 276,402 283,399 291,391 296,385 301,370 301,292 323,295.6 321.4,323.7 338.6,272.1 338.6,297.3 371.5,292.3 371.5,370 376,386 390,400 405,404 468,404 468,439 199,439"/></clipPath><clipPath id="c6"><polygon points="199,695 266,695 276,697 282,700 290,707 295.8,713.9 300.6,730.6 300.6,902.8 318,902 323.6,873.6 330.6,933.9 339.4,896.4 371.4,903.3 371.4,732 376.4,713.9 388.9,700 405.6,695 468,695 468,660 199,660"/></clipPath><clipPath id="c7"><polygon points="600,404 1245,404 1245,439 600,439"/></clipPath><clipPath id="c8"><polygon points="600,695 1245,695 1245,660 600,660"/></clipPath><clipPath id="c9"><polygon points="203,439 1528,439 1528,408 1881,408 1881,439 1651,471 1651,477 1492,477 1475,496 203,496"/></clipPath><clipPath id="c10"><polygon points="203,660 1528,660 1528,691 1881,691 1881,660 1651,627 1651,622 1492,622 1475,602 203,602"/></clipPath><clipPath id="c11"><polygon points="468,320 600,320 600,364 468,364"/></clipPath><clipPath id="c12"><polygon points="468,779 600,779 600,735 468,735"/></clipPath><clipPath id="c13"><polygon points="468,397 600,397 600,439 468,439"/></clipPath><clipPath id="c14"><polygon points="468,702 600,702 600,660 468,660"/></clipPath><clipPath id="c15"><polygon points="1245,320 1375,320 1375,346 1245,346"/></clipPath><clipPath id="c16"><polygon points="1245,779 1375,779 1375,752 1245,752"/></clipPath><clipPath id="c17"><polygon points="1311,346 1375,346 1375,373 1311,373"/></clipPath><clipPath id="c18"><polygon points="1311,752 1375,752 1375,726 1311,726"/></clipPath><clipPath id="c19"><polygon points="1245,386 1311,386 1311,413 1245,413"/></clipPath><clipPath id="c20"><polygon points="1245,713 1311,713 1311,686 1245,686"/></clipPath><clipPath id="c21"><polygon points="1245,413 1375,413 1375,439 1245,439"/></clipPath><clipPath id="c22"><polygon points="1245,686 1375,686 1375,660 1245,660"/></clipPath><clipPath id="c23"><polygon points="1397,320 1528,320 1528,346 1397,346"/></clipPath><clipPath id="c24"><polygon points="1397,779 1528,779 1528,752 1397,752"/></clipPath><clipPath id="c25"><polygon points="1397,346 1462,346 1462,373 1397,373"/></clipPath><clipPath id="c26"><polygon points="1397,752 1462,752 1462,726 1397,726"/></clipPath><clipPath id="c27"><polygon points="1462,386 1528,386 1528,413 1462,413"/></clipPath><clipPath id="c28"><polygon points="1462,713 1528,713 1528,686 1462,686"/></clipPath><clipPath id="c29"><polygon points="1397,413 1528,413 1528,439 1397,439"/></clipPath><clipPath id="c30"><polygon points="1397,686 1528,686 1528,660 1397,660"/></clipPath><clipPath id="c31"><polygon points="1375,320 1397,320 1397,373 1375,373"/></clipPath><clipPath id="c32"><polygon points="1375,779 1397,779 1397,726 1375,726"/></clipPath><clipPath id="c33"><polygon points="1375,413 1397,413 1397,439 1375,439"/></clipPath><clipPath id="c34"><polygon points="1375,686 1397,686 1397,660 1375,660"/></clipPath><clipPath id="c35"><polygon points="1528,302 1541,302 1541,333 1528,333"/></clipPath><clipPath id="c36"><polygon points="1528,797 1541,797 1541,766 1528,766"/></clipPath><g id="ol" stroke-width="0.71"><path d="M450.5 249.5L1280.5 249.5L1280.5 276.5L1563.5 276.5L1563.5 408.5" stroke="#000" fill="none"/><path d="M450.5 850.5L1280.5 850.5L1280.5 823.5L1563.5 823.5L1563.5 691.5" stroke="#000" fill="none"/><path d="M450.5 249.5L450.5 404.5" stroke="#000" fill="none"/><path d="M450.5 850.5L450.5 695.5" stroke="#000" fill="none"/><path d="M450.5 320.5L618.5 320.5L618.5 346.5L1245.5 346.5" stroke="#000" fill="none"/><path d="M450.5 779.5L618.5 779.5L618.5 752.5L1245.5 752.5" stroke="#000" fill="none"/><path d="M1245.5 320.5L1528.5 320.5" stroke="#000" fill="none"/><path d="M1245.5 779.5L1528.5 779.5" stroke="#000" fill="none"/><path d="M199.5 404.5L266.5 404.5" stroke="#000" fill="none"/><path d="M199.5 695.5L266.5 695.5" stroke="#000" fill="none"/><path d="M266.5 404.5L276.5 402.5L283.5 399.5L291.5 391.5L296.5 385.5L301.5 370.5L301.5 292.5" stroke="#000" fill="none"/><path d="M371.5 292.5L371.5 370.5L376.5 386.5L390.5 400.5L405.5 404.5L468.5 404.5" stroke="#000" fill="none"/><path d="M266.5 695.5L276.5 697.5L282.5 700.5L290.5 707.5L296.5 714.5L301.5 731.5L301.5 903.5" stroke="#000" fill="none"/><path d="M371.5 903.5L371.5 732.5L376.5 714.5L389.5 700.5L405.5 695.5L468.5 695.5" stroke="#000" fill="none"/><path d="M301.5 292.5L323.5 295.5L321.5 324.5L338.5 272.5L338.5 297.5L371.5 292.5" stroke="#1818a0" fill="none"/><path d="M301.5 903.5L318.5 902.5L323.5 874.5L330.5 934.5L339.5 896.5L371.5 903.5" stroke="#1818a0" fill="none"/><path d="M146.5 404.5L146.5 550.5" stroke="#000" fill="none"/><path d="M146.5 695.5L146.5 549.5" stroke="#000" fill="none"/><path d="M146.5 492.5L199.5 492.5" stroke="#000" fill="none"/><path d="M146.5 607.5L199.5 607.5" stroke="#000" fill="none"/><path d="M146.5 404.5L199.5 404.5" stroke="#000" fill="none"/><path d="M146.5 695.5L199.5 695.5" stroke="#000" fill="none"/><path d="M468.5 364.5L534.5 364.5" stroke="#000" fill="none"/><path d="M468.5 735.5L534.5 735.5" stroke="#000" fill="none"/><path d="M534.5 364.5L600.5 364.5" stroke="#000" fill="none"/><path d="M534.5 735.5L600.5 735.5" stroke="#000" fill="none"/><path d="M468.5 397.5L534.5 397.5" stroke="#000" fill="none"/><path d="M468.5 702.5L534.5 702.5" stroke="#000" fill="none"/><path d="M534.5 397.5L600.5 397.5" stroke="#000" fill="none"/><path d="M534.5 702.5L600.5 702.5" stroke="#000" fill="none"/><path d="M199.5 404.5L199.5 550.5" stroke="#000" fill="none"/><path d="M199.5 695.5L199.5 549.5" stroke="#000" fill="none"/><path d="M203.5 439.5L203.5 550.5" stroke="#000" fill="none"/><path d="M203.5 660.5L203.5 549.5" stroke="#000" fill="none"/><path d="M199.5 439.5L1528.5 439.5" stroke="#000" fill="none"/><path d="M199.5 660.5L1528.5 660.5" stroke="#000" fill="none"/><path d="M600.5 404.5L1245.5 404.5" stroke="#000" fill="none"/><path d="M600.5 695.5L1245.5 695.5" stroke="#000" fill="none"/><path d="M203.5 492.5L380.5 492.5L380.5 550.5" stroke="#000" fill="none"/><path d="M203.5 607.5L380.5 607.5L380.5 549.5" stroke="#000" fill="none"/><path d="M203.5 496.5L1475.5 496.5L1492.5 477.5L1651.5 477.5" stroke="#000" fill="none"/><path d="M203.5 602.5L1475.5 602.5L1492.5 622.5L1651.5 622.5" stroke="#000" fill="none"/><path d="M1651.5 471.5L1651.5 550.5" stroke="#000" fill="none"/><path d="M1651.5 627.5L1651.5 549.5" stroke="#000" fill="none"/><path d="M1651.5 471.5L1881.5 439.5" stroke="#000" fill="none"/><path d="M1651.5 627.5L1881.5 660.5" stroke="#000" fill="none"/><path d="M1528.5 408.5L1881.5 408.5L1881.5 550.5" stroke="#000" fill="none"/><path d="M1528.5 691.5L1881.5 691.5L1881.5 549.5" stroke="#000" fill="none"/><path d="M468.5 320.5L600.5 320.5L600.5 439.5" stroke="#000" fill="none"/><path d="M468.5 779.5L600.5 779.5L600.5 660.5" stroke="#000" fill="none"/><path d="M468.5 320.5L468.5 439.5" stroke="#000" fill="none"/><path d="M468.5 779.5L468.5 660.5" stroke="#000" fill="none"/><path d="M1245.5 320.5L1245.5 439.5" stroke="#000" fill="none"/><path d="M1245.5 779.5L1245.5 660.5" stroke="#000" fill="none"/><path d="M1528.5 320.5L1528.5 439.5" stroke="#000" fill="none"/><path d="M1528.5 779.5L1528.5 660.5" stroke="#000" fill="none"/><path d="M1375.5 320.5L1375.5 439.5" stroke="#000" fill="none"/><path d="M1375.5 779.5L1375.5 660.5" stroke="#000" fill="none"/><path d="M1397.5 320.5L1397.5 439.5" stroke="#000" fill="none"/><path d="M1397.5 779.5L1397.5 660.5" stroke="#000" fill="none"/><path d="M618.5 346.5L1311.5 346.5" stroke="#000" fill="none"/><path d="M618.5 752.5L1311.5 752.5" stroke="#000" fill="none"/><path d="M1462.5 346.5L1528.5 346.5" stroke="#000" fill="none"/><path d="M1462.5 752.5L1528.5 752.5" stroke="#000" fill="none"/><path d="M1344.5 373.5L1429.5 373.5" stroke="#000" fill="none"/><path d="M1344.5 726.5L1429.5 726.5" stroke="#000" fill="none"/><path d="M1245.5 386.5L1279.5 386.5" stroke="#000" fill="none"/><path d="M1245.5 713.5L1279.5 713.5" stroke="#000" fill="none"/><path d="M1495.5 386.5L1528.5 386.5" stroke="#000" fill="none"/><path d="M1495.5 713.5L1528.5 713.5" stroke="#000" fill="none"/><path d="M1311.5 413.5L1462.5 413.5" stroke="#000" fill="none"/><path d="M1311.5 686.5L1462.5 686.5" stroke="#000" fill="none"/><path d="M1528.5 302.5L1541.5 302.5L1541.5 333.5L1528.5 333.5L1528.5 302.5" stroke="#000" fill="none"/><path d="M1528.5 797.5L1541.5 797.5L1541.5 766.5L1528.5 766.5L1528.5 797.5" stroke="#000" fill="none"/><path d="M1541.5 320.5L1563.5 320.5" stroke="#000" fill="none"/><path d="M1541.5 779.5L1563.5 779.5" stroke="#000" fill="none"/><polygon points="534.5,347.0 518.0,351.4 505.9,363.5 501.5,380.0 505.9,396.5 518.0,408.6 534.5,413.0 551.0,408.6 563.1,396.5 567.5,380.0 563.1,363.5 551.0,351.4" fill="#fff" stroke="#000"/><circle cx="1311.6" cy="380" r="33" fill="#fff" stroke="#000"/><circle cx="1461.8" cy="380" r="33" fill="#fff" stroke="#000"/><polygon points="534.5,686.0 518.0,690.4 505.9,702.5 501.5,719.0 505.9,735.5 518.0,747.6 534.5,752.0 551.0,747.6 563.1,735.5 567.5,719.0 563.1,702.5 551.0,690.4" fill="#fff" stroke="#000"/><circle cx="1311.6" cy="719" r="33" fill="#fff" stroke="#000"/><circle cx="1461.8" cy="719" r="33" fill="#fff" stroke="#000"/><path d="M73.5 945.5L94.5 945.5L94.5 966.5L73.5 966.5L73.5 945.5" stroke="#000" fill="none"/><path d="M83.5 945.5L83.5 850.5" stroke="#000" fill="none"/><path d="M74.5 850.5L93.5 850.5L83.5 824.5L74.5 850.5" stroke="#000" fill="none"/><path d="M80.5 848.5L83.5 830.5L86.5 848.5" stroke="#999" fill="none"/><path d="M75.5 778.5L85.5 791.5L95.5 778.5" stroke="#000" fill="none"/><path d="M85.5 791.5L85.5 805.5" stroke="#000" fill="none"/><path d="M94.5 956.5L189.5 956.5" stroke="#000" fill="none"/><path d="M189.5 946.5L189.5 966.5L215.5 956.5L189.5 946.5" stroke="#000" fill="none"/><path d="M191.5 952.5L211.5 956.5L191.5 960.5" stroke="#999" fill="none"/><path d="M238.5 944.5L258.5 970.5" stroke="#000" fill="none"/><path d="M257.5 944.5L237.5 970.5" stroke="#000" fill="none"/><path d="M314.5 145.5L314.5 241.5" stroke="#000" fill="none"/><path d="M266.5 192.5L362.5 192.5" stroke="#000" fill="none"/><path d="M311.5 189.5L317.5 189.5L317.5 195.5L311.5 195.5L311.5 189.5" stroke="#000" fill="none"/></g></defs><g stroke-width="1"><path clip-path="url(#c1)" d="M348.90 347.00L447.90 248.00M388.60 347.00L487.60 248.00M428.30 347.00L527.30 248.00M468.00 347.00L567.00 248.00M507.70 347.00L606.70 248.00M547.40 347.00L646.40 248.00M587.10 347.00L686.10 248.00M626.80 347.00L725.80 248.00M666.50 347.00L765.50 248.00M706.20 347.00L805.20 248.00M745.90 347.00L844.90 248.00M785.60 347.00L884.60 248.00M825.30 347.00L924.30 248.00M865.00 347.00L964.00 248.00M904.70 347.00L1003.70 248.00M944.40 347.00L1043.40 248.00M984.10 347.00L1083.10 248.00M1023.80 347.00L1122.80 248.00M1063.50 347.00L1162.50 248.00M1103.20 347.00L1202.20 248.00M1142.90 347.00L1241.90 248.00M1182.60 347.00L1281.60 248.00M1222.30 347.00L1321.30 248.00M1262.00 347.00L1361.00 248.00M1301.70 347.00L1400.70 248.00M1341.40 347.00L1440.40 248.00M1381.10 347.00L1480.10 248.00M1420.80 347.00L1519.80 248.00M1460.50 347.00L1559.50 248.00M1500.20 347.00L1599.20 248.00M1539.90 347.00L1638.90 248.00" stroke="rgb(10,150,25)" stroke-width="0.71" fill="none"/><path clip-path="url(#c1)" d="M348.90 347.00L447.90 248.00M388.60 347.00L487.60 248.00M428.30 347.00L527.30 248.00M468.00 347.00L567.00 248.00M507.70 347.00L606.70 248.00M547.40 347.00L646.40 248.00M587.10 347.00L686.10 248.00M626.80 347.00L725.80 248.00M666.50 347.00L765.50 248.00M706.20 347.00L805.20 248.00M745.90 347.00L844.90 248.00M785.60 347.00L884.60 248.00M825.30 347.00L924.30 248.00M865.00 347.00L964.00 248.00M904.70 347.00L1003.70 248.00M944.40 347.00L1043.40 248.00M984.10 347.00L1083.10 248.00M1023.80 347.00L1122.80 248.00M1063.50 347.00L1162.50 248.00M1103.20 347.00L1202.20 248.00M1142.90 347.00L1241.90 248.00M1182.60 347.00L1281.60 248.00M1222.30 347.00L1321.30 248.00M1262.00 347.00L1361.00 248.00M1301.70 347.00L1400.70 248.00M1341.40 347.00L1440.40 248.00M1381.10 347.00L1480.10 248.00M1420.80 347.00L1519.80 248.00M1460.50 347.00L1559.50 248.00M1500.20 347.00L1599.20 248.00M1539.90 347.00L1638.90 248.00" stroke="rgb(10,150,25)" stroke-width="0.71" fill="none"/><path clip-path="url(#c2)" d="M321.30 851.00L421.30 751.00M361.00 851.00L461.00 751.00M400.70 851.00L500.70 751.00M440.40 851.00L540.40 751.00M480.10 851.00L580.10 751.00M519.80 851.00L619.80 751.00M559.50 851.00L659.50 751.00M599.20 851.00L699.20 751.00M638.90 851.00L738.90 751.00M678.60 851.00L778.60 751.00M718.30 851.00L818.30 751.00M758.00 851.00L858.00 751.00M797.70 851.00L897.70 751.00M837.40 851.00L937.40 751.00M877.10 851.00L977.10 751.00M916.80 851.00L1016.80 751.00M956.50 851.00L1056.50 751.00M996.20 851.00L1096.20 751.00M1035.90 851.00L1135.90 751.00M1075.60 851.00L1175.60 751.00M1115.30 851.00L1215.30 751.00M1155.00 851.00L1255.00 751.00M1194.70 851.00L1294.70 751.00M1234.40 851.00L1334.40 751.00M1274.10 851.00L1374.10 751.00M1313.80 851.00L1413.80 751.00M1353.50 851.00L1453.50 751.00M1393.20 851.00L1493.20 751.00M1432.90 851.00L1532.90 751.00M1472.60 851.00L1572.60 751.00M1512.30 851.00L1612.30 751.00M1552.00 851.00L1652.00 751.00" stroke="rgb(10,150,25)" stroke-width="0.71" fill="none"/><path clip-path="url(#c2)" d="M321.30 851.00L421.30 751.00M361.00 851.00L461.00 751.00M400.70 851.00L500.70 751.00M440.40 851.00L540.40 751.00M480.10 851.00L580.10 751.00M519.80 851.00L619.80 751.00M559.50 851.00L659.50 751.00M599.20 851.00L699.20 751.00M638.90 851.00L738.90 751.00M678.60 851.00L778.60 751.00M718.30 851.00L818.30 751.00M758.00 851.00L858.00 751.00M797.70 851.00L897.70 751.00M837.40 851.00L937.40 751.00M877.10 851.00L977.10 751.00M916.80 851.00L1016.80 751.00M956.50 851.00L1056.50 751.00M996.20 851.00L1096.20 751.00M1035.90 851.00L1135.90 751.00M1075.60 851.00L1175.60 751.00M1115.30 851.00L1215.30 751.00M1155.00 851.00L1255.00 751.00M1194.70 851.00L1294.70 751.00M1234.40 851.00L1334.40 751.00M1274.10 851.00L1374.10 751.00M1313.80 851.00L1413.80 751.00M1353.50 851.00L1453.50 751.00M1393.20 851.00L1493.20 751.00M1432.90 851.00L1532.90 751.00M1472.60 851.00L1572.60 751.00M1512.30 851.00L1612.30 751.00M1552.00 851.00L1652.00 751.00" stroke="rgb(10,150,25)" stroke-width="0.71" fill="none"/><path clip-path="url(#c3)" d="M45.40 493.00L135.40 403.00M75.20 493.00L165.20 403.00M105.00 493.00L195.00 403.00M134.80 493.00L224.80 403.00M164.60 493.00L254.60 403.00M194.40 493.00L284.40 403.00" stroke="rgb(10,150,25)" stroke-width="0.71" fill="none"/><path clip-path="url(#c3)" d="M45.40 493.00L135.40 403.00M75.20 493.00L165.20 403.00M105.00 493.00L195.00 403.00M134.80 493.00L224.80 403.00M164.60 493.00L254.60 403.00M194.40 493.00L284.40 403.00" stroke="rgb(10,150,25)" stroke-width="0.71" fill="none"/><path clip-path="url(#c4)" d="M51.00 696.00L141.00 606.00M80.80 696.00L170.80 606.00M110.60 696.00L200.60 606.00M140.40 696.00L230.40 606.00M170.20 696.00L260.20 606.00" stroke="rgb(10,150,25)" stroke-width="0.71" fill="none"/><path clip-path="url(#c4)" d="M51.00 696.00L141.00 606.00M80.80 696.00L170.80 606.00M110.60 696.00L200.60 606.00M140.40 696.00L230.40 606.00M170.20 696.00L260.20 606.00" stroke="rgb(10,150,25)" stroke-width="0.71" fill="none"/><path clip-path="url(#c5)" d="M198.00 -7.10L469.00 263.90M198.00 22.70L469.00 293.70M198.00 52.50L469.00 323.50M198.00 82.30L469.00 353.30M198.00 112.10L469.00 383.10M198.00 141.90L469.00 412.90M198.00 171.70L469.00 442.70M198.00 201.50L469.00 472.50M198.00 231.30L469.00 502.30M198.00 261.10L469.00 532.10M198.00 290.90L469.00 561.90M198.00 320.70L469.00 591.70M198.00 350.50L469.00 621.50M198.00 380.30L469.00 651.30M198.00 410.10L469.00 681.10" stroke="rgb(10,150,25)" stroke-width="0.71" fill="none"/><path clip-path="url(#c5)" d="M198.00 -7.10L469.00 263.90M198.00 22.70L469.00 293.70M198.00 52.50L469.00 323.50M198.00 82.30L469.00 353.30M198.00 112.10L469.00 383.10M198.00 141.90L469.00 412.90M198.00 171.70L469.00 442.70M198.00 201.50L469.00 472.50M198.00 231.30L469.00 502.30M198.00 261.10L469.00 532.10M198.00 290.90L469.00 561.90M198.00 320.70L469.00 591.70M198.00 350.50L469.00 621.50M198.00 380.30L469.00 651.30M198.00 410.10L469.00 681.10" stroke="rgb(10,150,25)" stroke-width="0.71" fill="none"/><path clip-path="url(#c6)" d="M198.00 380.30L469.00 651.30M198.00 410.10L469.00 681.10M198.00 439.90L469.00 710.90M198.00 469.70L469.00 740.70M198.00 499.50L469.00 770.50M198.00 529.30L469.00 800.30M198.00 559.10L469.00 830.10M198.00 588.90L469.00 859.90M198.00 618.70L469.00 889.70M198.00 648.50L469.00 919.50M198.00 678.30L469.00 949.30M198.00 708.10L469.00 979.10M198.00 737.90L469.00 1008.90M198.00 767.70L469.00 1038.70M198.00 797.50L469.00 1068.50M198.00 827.30L469.00 1098.30M198.00 857.10L469.00 1128.10M198.00 886.90L469.00 1157.90M198.00 916.70L469.00 1187.70" stroke="rgb(10,150,25)" stroke-width="0.71" fill="none"/><path clip-path="url(#c6)" d="M198.00 380.30L469.00 651.30M198.00 410.10L469.00 681.10M198.00 439.90L469.00 710.90M198.00 469.70L469.00 740.70M198.00 499.50L469.00 770.50M198.00 529.30L469.00 800.30M198.00 559.10L469.00 830.10M198.00 588.90L469.00 859.90M198.00 618.70L469.00 889.70M198.00 648.50L469.00 919.50M198.00 678.30L469.00 949.30M198.00 708.10L469.00 979.10M198.00 737.90L469.00 1008.90M198.00 767.70L469.00 1038.70M198.00 797.50L469.00 1068.50M198.00 827.30L469.00 1098.30M198.00 857.10L469.00 1128.10M198.00 886.90L469.00 1157.90M198.00 916.70L469.00 1187.70" stroke="rgb(10,150,25)" stroke-width="0.71" fill="none"/><path clip-path="url(#c7)" d="M599.00 -279.10L1246.00 367.90M599.00 -239.40L1246.00 407.60M599.00 -199.70L1246.00 447.30M599.00 -160.00L1246.00 487.00M599.00 -120.30L1246.00 526.70M599.00 -80.60L1246.00 566.40M599.00 -40.90L1246.00 606.10M599.00 -1.20L1246.00 645.80M599.00 38.50L1246.00 685.50M599.00 78.20L1246.00 725.20M599.00 117.90L1246.00 764.90M599.00 157.60L1246.00 804.60M599.00 197.30L1246.00 844.30M599.00 237.00L1246.00 884.00M599.00 276.70L1246.00 923.70M599.00 316.40L1246.00 963.40M599.00 356.10L1246.00 1003.10M599.00 395.80L1246.00 1042.80M599.00 435.50L1246.00 1082.50" stroke="rgb(10,150,25)" stroke-width="0.71" fill="none"/><path clip-path="url(#c7)" d="M599.00 -279.10L1246.00 367.90M599.00 -239.40L1246.00 407.60M599.00 -199.70L1246.00 447.30M599.00 -160.00L1246.00 487.00M599.00 -120.30L1246.00 526.70M599.00 -80.60L1246.00 566.40M599.00 -40.90L1246.00 606.10M599.00 -1.20L1246.00 645.80M599.00 38.50L1246.00 685.50M599.00 78.20L1246.00 725.20M599.00 117.90L1246.00 764.90M599.00 157.60L1246.00 804.60M599.00 197.30L1246.00 844.30M599.00 237.00L1246.00 884.00M599.00 276.70L1246.00 923.70M599.00 316.40L1246.00 963.40M599.00 356.10L1246.00 1003.10M599.00 395.80L1246.00 1042.80M599.00 435.50L1246.00 1082.50" stroke="rgb(10,150,25)" stroke-width="0.71" fill="none"/><path clip-path="url(#c8)" d="M599.00 -1.20L1246.00 645.80M599.00 38.50L1246.00 685.50M599.00 78.20L1246.00 725.20M599.00 117.90L1246.00 764.90M599.00 157.60L1246.00 804.60M599.00 197.30L1246.00 844.30M599.00 237.00L1246.00 884.00M599.00 276.70L1246.00 923.70M599.00 316.40L1246.00 963.40M599.00 356.10L1246.00 1003.10M599.00 395.80L1246.00 1042.80M599.00 435.50L1246.00 1082.50M599.00 475.20L1246.00 1122.20M599.00 514.90L1246.00 1161.90M599.00 554.60L1246.00 1201.60M599.00 594.30L1246.00 1241.30M599.00 634.00L1246.00 1281.00M599.00 673.70L1246.00 1320.70" stroke="rgb(10,150,25)" stroke-width="0.71" fill="none"/><path clip-path="url(#c8)" d="M599.00 -1.20L1246.00 645.80M599.00 38.50L1246.00 685.50M599.00 78.20L1246.00 725.20M599.00 117.90L1246.00 764.90M599.00 157.60L1246.00 804.60M599.00 197.30L1246.00 844.30M599.00 237.00L1246.00 884.00M599.00 276.70L1246.00 923.70M599.00 316.40L1246.00 963.40M599.00 356.10L1246.00 1003.10M599.00 395.80L1246.00 1042.80M599.00 435.50L1246.00 1082.50M599.00 475.20L1246.00 1122.20M599.00 514.90L1246.00 1161.90M599.00 554.60L1246.00 1201.60M599.00 594.30L1246.00 1241.30M599.00 634.00L1246.00 1281.00M599.00 673.70L1246.00 1320.70" stroke="rgb(10,150,25)" stroke-width="0.71" fill="none"/><path clip-path="url(#c9)" d="M98.50 497.00L188.50 407.00M138.20 497.00L228.20 407.00M177.90 497.00L267.90 407.00M217.60 497.00L307.60 407.00M257.30 497.00L347.30 407.00M297.00 497.00L387.00 407.00M336.70 497.00L426.70 407.00M376.40 497.00L466.40 407.00M416.10 497.00L506.10 407.00M455.80 497.00L545.80 407.00M495.50 497.00L585.50 407.00M535.20 497.00L625.20 407.00M574.90 497.00L664.90 407.00M614.60 497.00L704.60 407.00M654.30 497.00L744.30 407.00M694.00 497.00L784.00 407.00M733.70 497.00L823.70 407.00M773.40 497.00L863.40 407.00M813.10 497.00L903.10 407.00M852.80 497.00L942.80 407.00M892.50 497.00L982.50 407.00M932.20 497.00L1022.20 407.00M971.90 497.00L1061.90 407.00M1011.60 497.00L1101.60 407.00M1051.30 497.00L1141.30 407.00M1091.00 497.00L1181.00 407.00M1130.70 497.00L1220.70 407.00M1170.40 497.00L1260.40 407.00M1210.10 497.00L1300.10 407.00M1249.80 497.00L1339.80 407.00M1289.50 497.00L1379.50 407.00M1329.20 497.00L1419.20 407.00M1368.90 497.00L1458.90 407.00M1408.60 497.00L1498.60 407.00M1448.30 497.00L1538.30 407.00M1488.00 497.00L1578.00 407.00M1527.70 497.00L1617.70 407.00M1567.40 497.00L1657.40 407.00M1607.10 497.00L1697.10 407.00M1646.80 497.00L1736.80 407.00M1686.50 497.00L1776.50 407.00M1726.20 497.00L1816.20 407.00M1765.90 497.00L1855.90 407.00M1805.60 497.00L1895.60 407.00M1845.30 497.00L1935.30 407.00" stroke="rgb(10,150,25)" stroke-width="0.71" fill="none"/><path clip-path="url(#c9)" d="M98.50 497.00L188.50 407.00M138.20 497.00L228.20 407.00M177.90 497.00L267.90 407.00M217.60 497.00L307.60 407.00M257.30 497.00L347.30 407.00M297.00 497.00L387.00 407.00M336.70 497.00L426.70 407.00M376.40 497.00L466.40 407.00M416.10 497.00L506.10 407.00M455.80 497.00L545.80 407.00M495.50 497.00L585.50 407.00M535.20 497.00L625.20 407.00M574.90 497.00L664.90 407.00M614.60 497.00L704.60 407.00M654.30 497.00L744.30 407.00M694.00 497.00L784.00 407.00M733.70 497.00L823.70 407.00M773.40 497.00L863.40 407.00M813.10 497.00L903.10 407.00M852.80 497.00L942.80 407.00M892.50 497.00L982.50 407.00M932.20 497.00L1022.20 407.00M971.90 497.00L1061.90 407.00M1011.60 497.00L1101.60 407.00M1051.30 497.00L1141.30 407.00M1091.00 497.00L1181.00 407.00M1130.70 497.00L1220.70 407.00M1170.40 497.00L1260.40 407.00M1210.10 497.00L1300.10 407.00M1249.80 497.00L1339.80 407.00M1289.50 497.00L1379.50 407.00M1329.20 497.00L1419.20 407.00M1368.90 497.00L1458.90 407.00M1408.60 497.00L1498.60 407.00M1448.30 497.00L1538.30 407.00M1488.00 497.00L1578.00 407.00M1527.70 497.00L1617.70 407.00M1567.40 497.00L1657.40 407.00M1607.10 497.00L1697.10 407.00M1646.80 497.00L1736.80 407.00M1686.50 497.00L1776.50 407.00M1726.20 497.00L1816.20 407.00M1765.90 497.00L1855.90 407.00M1805.60 497.00L1895.60 407.00M1845.30 497.00L1935.30 407.00" stroke="rgb(10,150,25)" stroke-width="0.71" fill="none"/><path clip-path="url(#c10)" d="M102.00 692.00L193.00 601.00M141.70 692.00L232.70 601.00M181.40 692.00L272.40 601.00M221.10 692.00L312.10 601.00M260.80 692.00L351.80 601.00M300.50 692.00L391.50 601.00M340.20 692.00L431.20 601.00M379.90 692.00L470.90 601.00M419.60 692.00L510.60 601.00M459.30 692.00L550.30 601.00M499.00 692.00L590.00 601.00M538.70 692.00L629.70 601.00M578.40 692.00L669.40 601.00M618.10 692.00L709.10 601.00M657.80 692.00L748.80 601.00M697.50 692.00L788.50 601.00M737.20 692.00L828.20 601.00M776.90 692.00L867.90 601.00M816.60 692.00L907.60 601.00M856.30 692.00L947.30 601.00M896.00 692.00L987.00 601.00M935.70 692.00L1026.70 601.00M975.40 692.00L1066.40 601.00M1015.10 692.00L1106.10 601.00M1054.80 692.00L1145.80 601.00M1094.50 692.00L1185.50 601.00M1134.20 692.00L1225.20 601.00M1173.90 692.00L1264.90 601.00M1213.60 692.00L1304.60 601.00M1253.30 692.00L1344.30 601.00M1293.00 692.00L1384.00 601.00M1332.70 692.00L1423.70 601.00M1372.40 692.00L1463.40 601.00M1412.10 692.00L1503.10 601.00M1451.80 692.00L1542.80 601.00M1491.50 692.00L1582.50 601.00M1531.20 692.00L1622.20 601.00M1570.90 692.00L1661.90 601.00M1610.60 692.00L1701.60 601.00M1650.30 692.00L1741.30 601.00M1690.00 692.00L1781.00 601.00M1729.70 692.00L1820.70 601.00M1769.40 692.00L1860.40 601.00M1809.10 692.00L1900.10 601.00M1848.80 692.00L1939.80 601.00" stroke="rgb(10,150,25)" stroke-width="0.71" fill="none"/><path clip-path="url(#c10)" d="M102.00 692.00L193.00 601.00M141.70 692.00L232.70 601.00M181.40 692.00L272.40 601.00M221.10 692.00L312.10 601.00M260.80 692.00L351.80 601.00M300.50 692.00L391.50 601.00M340.20 692.00L431.20 601.00M379.90 692.00L470.90 601.00M419.60 692.00L510.60 601.00M459.30 692.00L550.30 601.00M499.00 692.00L590.00 601.00M538.70 692.00L629.70 601.00M578.40 692.00L669.40 601.00M618.10 692.00L709.10 601.00M657.80 692.00L748.80 601.00M697.50 692.00L788.50 601.00M737.20 692.00L828.20 601.00M776.90 692.00L867.90 601.00M816.60 692.00L907.60 601.00M856.30 692.00L947.30 601.00M896.00 692.00L987.00 601.00M935.70 692.00L1026.70 601.00M975.40 692.00L1066.40 601.00M1015.10 692.00L1106.10 601.00M1054.80 692.00L1145.80 601.00M1094.50 692.00L1185.50 601.00M1134.20 692.00L1225.20 601.00M1173.90 692.00L1264.90 601.00M1213.60 692.00L1304.60 601.00M1253.30 692.00L1344.30 601.00M1293.00 692.00L1384.00 601.00M1332.70 692.00L1423.70 601.00M1372.40 692.00L1463.40 601.00M1412.10 692.00L1503.10 601.00M1451.80 692.00L1542.80 601.00M1491.50 692.00L1582.50 601.00M1531.20 692.00L1622.20 601.00M1570.90 692.00L1661.90 601.00M1610.60 692.00L1701.60 601.00M1650.30 692.00L1741.30 601.00M1690.00 692.00L1781.00 601.00M1729.70 692.00L1820.70 601.00M1769.40 692.00L1860.40 601.00M1809.10 692.00L1900.10 601.00M1848.80 692.00L1939.80 601.00" stroke="rgb(10,150,25)" stroke-width="0.71" fill="none"/><path clip-path="url(#c11)" d="M409.80 365.00L455.80 319.00M439.60 365.00L485.60 319.00M469.40 365.00L515.40 319.00M499.20 365.00L545.20 319.00M529.00 365.00L575.00 319.00M558.80 365.00L604.80 319.00M588.60 365.00L634.60 319.00" stroke="rgb(10,150,25)" stroke-width="0.71" fill="none"/><path clip-path="url(#c11)" d="M409.80 365.00L455.80 319.00M439.60 365.00L485.60 319.00M469.40 365.00L515.40 319.00M499.20 365.00L545.20 319.00M529.00 365.00L575.00 319.00M558.80 365.00L604.80 319.00M588.60 365.00L634.60 319.00" stroke="rgb(10,150,25)" stroke-width="0.71" fill="none"/><path clip-path="url(#c12)" d="M412.00 780.00L458.00 734.00M441.80 780.00L487.80 734.00M471.60 780.00L517.60 734.00M501.40 780.00L547.40 734.00M531.20 780.00L577.20 734.00M561.00 780.00L607.00 734.00M590.80 780.00L636.80 734.00" stroke="rgb(10,150,25)" stroke-width="0.71" fill="none"/><path clip-path="url(#c12)" d="M412.00 780.00L458.00 734.00M441.80 780.00L487.80 734.00M471.60 780.00L517.60 734.00M501.40 780.00L547.40 734.00M531.20 780.00L577.20 734.00M561.00 780.00L607.00 734.00M590.80 780.00L636.80 734.00" stroke="rgb(10,150,25)" stroke-width="0.71" fill="none"/><path clip-path="url(#c13)" d="M424.20 440.00L468.20 396.00M454.00 440.00L498.00 396.00M483.80 440.00L527.80 396.00M513.60 440.00L557.60 396.00M543.40 440.00L587.40 396.00M573.20 440.00L617.20 396.00" stroke="rgb(10,150,25)" stroke-width="0.71" fill="none"/><path clip-path="url(#c13)" d="M424.20 440.00L468.20 396.00M454.00 440.00L498.00 396.00M483.80 440.00L527.80 396.00M513.60 440.00L557.60 396.00M543.40 440.00L587.40 396.00M573.20 440.00L617.20 396.00" stroke="rgb(10,150,25)" stroke-width="0.71" fill="none"/><path clip-path="url(#c14)" d="M399.60 703.00L443.60 659.00M429.40 703.00L473.40 659.00M459.20 703.00L503.20 659.00M489.00 703.00L533.00 659.00M518.80 703.00L562.80 659.00M548.60 703.00L592.60 659.00M578.40 703.00L622.40 659.00" stroke="rgb(10,150,25)" stroke-width="0.71" fill="none"/><path clip-path="url(#c14)" d="M399.60 703.00L443.60 659.00M429.40 703.00L473.40 659.00M459.20 703.00L503.20 659.00M489.00 703.00L533.00 659.00M518.80 703.00L562.80 659.00M548.60 703.00L592.60 659.00M578.40 703.00L622.40 659.00" stroke="rgb(10,150,25)" stroke-width="0.71" fill="none"/><path clip-path="url(#c15)" d="M1244.00 178.50L1376.00 310.50M1244.00 208.30L1376.00 340.30M1244.00 238.10L1376.00 370.10M1244.00 267.90L1376.00 399.90M1244.00 297.70L1376.00 429.70M1244.00 327.50L1376.00 459.50" stroke="rgb(10,150,25)" stroke-width="0.71" fill="none"/><path clip-path="url(#c15)" d="M1244.00 178.50L1376.00 310.50M1244.00 208.30L1376.00 340.30M1244.00 238.10L1376.00 370.10M1244.00 267.90L1376.00 399.90M1244.00 297.70L1376.00 429.70M1244.00 327.50L1376.00 459.50" stroke="rgb(10,150,25)" stroke-width="0.71" fill="none"/><path clip-path="url(#c16)" d="M1244.00 595.70L1376.00 727.70M1244.00 625.50L1376.00 757.50M1244.00 655.30L1376.00 787.30M1244.00 685.10L1376.00 817.10M1244.00 714.90L1376.00 846.90M1244.00 744.70L1376.00 876.70M1244.00 774.50L1376.00 906.50" stroke="rgb(10,150,25)" stroke-width="0.71" fill="none"/><path clip-path="url(#c16)" d="M1244.00 595.70L1376.00 727.70M1244.00 625.50L1376.00 757.50M1244.00 655.30L1376.00 787.30M1244.00 685.10L1376.00 817.10M1244.00 714.90L1376.00 846.90M1244.00 744.70L1376.00 876.70M1244.00 774.50L1376.00 906.50" stroke="rgb(10,150,25)" stroke-width="0.71" fill="none"/><path clip-path="url(#c17)" d="M1310.00 274.30L1376.00 340.30M1310.00 304.10L1376.00 370.10M1310.00 333.90L1376.00 399.90M1310.00 363.70L1376.00 429.70" stroke="rgb(10,150,25)" stroke-width="0.71" fill="none"/><path clip-path="url(#c17)" d="M1310.00 274.30L1376.00 340.30M1310.00 304.10L1376.00 370.10M1310.00 333.90L1376.00 399.90M1310.00 363.70L1376.00 429.70" stroke="rgb(10,150,25)" stroke-width="0.71" fill="none"/><path clip-path="url(#c18)" d="M1310.00 631.90L1376.00 697.90M1310.00 661.70L1376.00 727.70M1310.00 691.50L1376.00 757.50M1310.00 721.30L1376.00 787.30" stroke="rgb(10,150,25)" stroke-width="0.71" fill="none"/><path clip-path="url(#c18)" d="M1310.00 631.90L1376.00 697.90M1310.00 661.70L1376.00 727.70M1310.00 691.50L1376.00 757.50M1310.00 721.30L1376.00 787.30" stroke="rgb(10,150,25)" stroke-width="0.71" fill="none"/><path clip-path="url(#c19)" d="M1244.00 297.70L1312.00 365.70M1244.00 327.50L1312.00 395.50M1244.00 357.30L1312.00 425.30M1244.00 387.10L1312.00 455.10" stroke="rgb(10,150,25)" stroke-width="0.71" fill="none"/><path clip-path="url(#c19)" d="M1244.00 297.70L1312.00 365.70M1244.00 327.50L1312.00 395.50M1244.00 357.30L1312.00 425.30M1244.00 387.10L1312.00 455.10" stroke="rgb(10,150,25)" stroke-width="0.71" fill="none"/><path clip-path="url(#c20)" d="M1244.00 595.70L1312.00 663.70M1244.00 625.50L1312.00 693.50M1244.00 655.30L1312.00 723.30M1244.00 685.10L1312.00 753.10" stroke="rgb(10,150,25)" stroke-width="0.71" fill="none"/><path clip-path="url(#c20)" d="M1244.00 595.70L1312.00 663.70M1244.00 625.50L1312.00 693.50M1244.00 655.30L1312.00 723.30M1244.00 685.10L1312.00 753.10" stroke="rgb(10,150,25)" stroke-width="0.71" fill="none"/><path clip-path="url(#c21)" d="M1244.00 267.90L1376.00 399.90M1244.00 297.70L1376.00 429.70M1244.00 327.50L1376.00 459.50M1244.00 357.30L1376.00 489.30M1244.00 387.10L1376.00 519.10M1244.00 416.90L1376.00 548.90" stroke="rgb(10,150,25)" stroke-width="0.71" fill="none"/><path clip-path="url(#c21)" d="M1244.00 267.90L1376.00 399.90M1244.00 297.70L1376.00 429.70M1244.00 327.50L1376.00 459.50M1244.00 357.30L1376.00 489.30M1244.00 387.10L1376.00 519.10M1244.00 416.90L1376.00 548.90" stroke="rgb(10,150,25)" stroke-width="0.71" fill="none"/><path clip-path="url(#c22)" d="M1244.00 506.30L1376.00 638.30M1244.00 536.10L1376.00 668.10M1244.00 565.90L1376.00 697.90M1244.00 595.70L1376.00 727.70M1244.00 625.50L1376.00 757.50M1244.00 655.30L1376.00 787.30" stroke="rgb(10,150,25)" stroke-width="0.71" fill="none"/><path clip-path="url(#c22)" d="M1244.00 506.30L1376.00 638.30M1244.00 536.10L1376.00 668.10M1244.00 565.90L1376.00 697.90M1244.00 595.70L1376.00 727.70M1244.00 625.50L1376.00 757.50M1244.00 655.30L1376.00 787.30" stroke="rgb(10,150,25)" stroke-width="0.71" fill="none"/><path clip-path="url(#c23)" d="M1396.00 181.50L1529.00 314.50M1396.00 211.30L1529.00 344.30M1396.00 241.10L1529.00 374.10M1396.00 270.90L1529.00 403.90M1396.00 300.70L1529.00 433.70M1396.00 330.50L1529.00 463.50" stroke="rgb(10,150,25)" stroke-width="0.71" fill="none"/><path clip-path="url(#c23)" d="M1396.00 181.50L1529.00 314.50M1396.00 211.30L1529.00 344.30M1396.00 241.10L1529.00 374.10M1396.00 270.90L1529.00 403.90M1396.00 300.70L1529.00 433.70M1396.00 330.50L1529.00 463.50" stroke="rgb(10,150,25)" stroke-width="0.71" fill="none"/><path clip-path="url(#c24)" d="M1396.00 598.70L1529.00 731.70M1396.00 628.50L1529.00 761.50M1396.00 658.30L1529.00 791.30M1396.00 688.10L1529.00 821.10M1396.00 717.90L1529.00 850.90M1396.00 747.70L1529.00 880.70M1396.00 777.50L1529.00 910.50" stroke="rgb(10,150,25)" stroke-width="0.71" fill="none"/><path clip-path="url(#c24)" d="M1396.00 598.70L1529.00 731.70M1396.00 628.50L1529.00 761.50M1396.00 658.30L1529.00 791.30M1396.00 688.10L1529.00 821.10M1396.00 717.90L1529.00 850.90M1396.00 747.70L1529.00 880.70M1396.00 777.50L1529.00 910.50" stroke="rgb(10,150,25)" stroke-width="0.71" fill="none"/><path clip-path="url(#c25)" d="M1396.00 270.90L1463.00 337.90M1396.00 300.70L1463.00 367.70M1396.00 330.50L1463.00 397.50M1396.00 360.30L1463.00 427.30" stroke="rgb(10,150,25)" stroke-width="0.71" fill="none"/><path clip-path="url(#c25)" d="M1396.00 270.90L1463.00 337.90M1396.00 300.70L1463.00 367.70M1396.00 330.50L1463.00 397.50M1396.00 360.30L1463.00 427.30" stroke="rgb(10,150,25)" stroke-width="0.71" fill="none"/><path clip-path="url(#c26)" d="M1396.00 658.30L1463.00 725.30M1396.00 688.10L1463.00 755.10M1396.00 717.90L1463.00 784.90M1396.00 747.70L1463.00 814.70" stroke="rgb(10,150,25)" stroke-width="0.71" fill="none"/><path clip-path="url(#c26)" d="M1396.00 658.30L1463.00 725.30M1396.00 688.10L1463.00 755.10M1396.00 717.90L1463.00 784.90M1396.00 747.70L1463.00 814.70" stroke="rgb(10,150,25)" stroke-width="0.71" fill="none"/><path clip-path="url(#c27)" d="M1461.00 306.10L1529.00 374.10M1461.00 335.90L1529.00 403.90M1461.00 365.70L1529.00 433.70M1461.00 395.50L1529.00 463.50" stroke="rgb(10,150,25)" stroke-width="0.71" fill="none"/><path clip-path="url(#c27)" d="M1461.00 306.10L1529.00 374.10M1461.00 335.90L1529.00 403.90M1461.00 365.70L1529.00 433.70M1461.00 395.50L1529.00 463.50" stroke="rgb(10,150,25)" stroke-width="0.71" fill="none"/><path clip-path="url(#c28)" d="M1461.00 604.10L1529.00 672.10M1461.00 633.90L1529.00 701.90M1461.00 663.70L1529.00 731.70M1461.00 693.50L1529.00 761.50" stroke="rgb(10,150,25)" stroke-width="0.71" fill="none"/><path clip-path="url(#c28)" d="M1461.00 604.10L1529.00 672.10M1461.00 633.90L1529.00 701.90M1461.00 663.70L1529.00 731.70M1461.00 693.50L1529.00 761.50" stroke="rgb(10,150,25)" stroke-width="0.71" fill="none"/><path clip-path="url(#c29)" d="M1396.00 270.90L1529.00 403.90M1396.00 300.70L1529.00 433.70M1396.00 330.50L1529.00 463.50M1396.00 360.30L1529.00 493.30M1396.00 390.10L1529.00 523.10M1396.00 419.90L1529.00 552.90" stroke="rgb(10,150,25)" stroke-width="0.71" fill="none"/><path clip-path="url(#c29)" d="M1396.00 270.90L1529.00 403.90M1396.00 300.70L1529.00 433.70M1396.00 330.50L1529.00 463.50M1396.00 360.30L1529.00 493.30M1396.00 390.10L1529.00 523.10M1396.00 419.90L1529.00 552.90" stroke="rgb(10,150,25)" stroke-width="0.71" fill="none"/><path clip-path="url(#c30)" d="M1396.00 509.30L1529.00 642.30M1396.00 539.10L1529.00 672.10M1396.00 568.90L1529.00 701.90M1396.00 598.70L1529.00 731.70M1396.00 628.50L1529.00 761.50M1396.00 658.30L1529.00 791.30" stroke="rgb(10,150,25)" stroke-width="0.71" fill="none"/><path clip-path="url(#c30)" d="M1396.00 509.30L1529.00 642.30M1396.00 539.10L1529.00 672.10M1396.00 568.90L1529.00 701.90M1396.00 598.70L1529.00 731.70M1396.00 628.50L1529.00 761.50M1396.00 658.30L1529.00 791.30" stroke="rgb(10,150,25)" stroke-width="0.71" fill="none"/><path clip-path="url(#c31)" d="M1311.67 374.00L1366.67 319.00M1321.60 374.00L1376.60 319.00M1331.53 374.00L1386.53 319.00M1341.46 374.00L1396.46 319.00M1351.39 374.00L1406.39 319.00M1361.32 374.00L1416.32 319.00M1371.25 374.00L1426.25 319.00M1381.18 374.00L1436.18 319.00M1391.11 374.00L1446.11 319.00" stroke="rgb(10,150,25)" stroke-width="0.71" fill="none"/><path clip-path="url(#c31)" d="M1311.67 374.00L1366.67 319.00M1321.60 374.00L1376.60 319.00M1331.53 374.00L1386.53 319.00M1341.46 374.00L1396.46 319.00M1351.39 374.00L1406.39 319.00M1361.32 374.00L1416.32 319.00M1371.25 374.00L1426.25 319.00M1381.18 374.00L1436.18 319.00M1391.11 374.00L1446.11 319.00" stroke="rgb(10,150,25)" stroke-width="0.71" fill="none"/><path clip-path="url(#c32)" d="M1312.80 780.00L1367.80 725.00M1322.73 780.00L1377.73 725.00M1332.66 780.00L1387.66 725.00M1342.59 780.00L1397.59 725.00M1352.52 780.00L1407.52 725.00M1362.45 780.00L1417.45 725.00M1372.38 780.00L1427.38 725.00M1382.31 780.00L1437.31 725.00M1392.24 780.00L1447.24 725.00" stroke="rgb(10,150,25)" stroke-width="0.71" fill="none"/><path clip-path="url(#c32)" d="M1312.80 780.00L1367.80 725.00M1322.73 780.00L1377.73 725.00M1332.66 780.00L1387.66 725.00M1342.59 780.00L1397.59 725.00M1352.52 780.00L1407.52 725.00M1362.45 780.00L1417.45 725.00M1372.38 780.00L1427.38 725.00M1382.31 780.00L1437.31 725.00M1392.24 780.00L1447.24 725.00" stroke="rgb(10,150,25)" stroke-width="0.71" fill="none"/><path clip-path="url(#c33)" d="M1345.97 440.00L1373.97 412.00M1355.90 440.00L1383.90 412.00M1365.83 440.00L1393.83 412.00M1375.76 440.00L1403.76 412.00M1385.69 440.00L1413.69 412.00M1395.62 440.00L1423.62 412.00" stroke="rgb(10,150,25)" stroke-width="0.71" fill="none"/><path clip-path="url(#c33)" d="M1345.97 440.00L1373.97 412.00M1355.90 440.00L1383.90 412.00M1365.83 440.00L1393.83 412.00M1375.76 440.00L1403.76 412.00M1385.69 440.00L1413.69 412.00M1395.62 440.00L1423.62 412.00" stroke="rgb(10,150,25)" stroke-width="0.71" fill="none"/><path clip-path="url(#c34)" d="M1347.22 687.00L1375.22 659.00M1357.15 687.00L1385.15 659.00M1367.08 687.00L1395.08 659.00M1377.01 687.00L1405.01 659.00M1386.94 687.00L1414.94 659.00" stroke="rgb(10,150,25)" stroke-width="0.71" fill="none"/><path clip-path="url(#c34)" d="M1347.22 687.00L1375.22 659.00M1357.15 687.00L1385.15 659.00M1367.08 687.00L1395.08 659.00M1377.01 687.00L1405.01 659.00M1386.94 687.00L1414.94 659.00" stroke="rgb(10,150,25)" stroke-width="0.71" fill="none"/><path clip-path="url(#c35)" d="M1490.79 334.00L1523.79 301.00M1500.72 334.00L1533.72 301.00M1510.65 334.00L1543.65 301.00M1520.58 334.00L1553.58 301.00M1530.51 334.00L1563.51 301.00" stroke="rgb(10,150,25)" stroke-width="0.71" fill="none"/><path clip-path="url(#c35)" d="M1490.79 334.00L1523.79 301.00M1500.72 334.00L1533.72 301.00M1510.65 334.00L1543.65 301.00M1520.58 334.00L1553.58 301.00M1530.51 334.00L1563.51 301.00" stroke="rgb(10,150,25)" stroke-width="0.71" fill="none"/><path clip-path="url(#c36)" d="M1493.50 798.00L1526.50 765.00M1503.43 798.00L1536.43 765.00M1513.36 798.00L1546.36 765.00M1523.29 798.00L1556.29 765.00M1533.22 798.00L1566.22 765.00" stroke="rgb(10,150,25)" stroke-width="0.71" fill="none"/><path clip-path="url(#c36)" d="M1493.50 798.00L1526.50 765.00M1503.43 798.00L1536.43 765.00M1513.36 798.00L1546.36 765.00M1523.29 798.00L1556.29 765.00M1533.22 798.00L1566.22 765.00" stroke="rgb(10,150,25)" stroke-width="0.71" fill="none"/><path d="M76 549.5L250 549.5M277 549.5L305 549.5M333 549.5L503 549.5M530 549.5L558 549.5M586 549.5L755 549.5M782 549.5L810 549.5M838 549.5L1007 549.5M1034 549.5L1062 549.5M1090 549.5L1260 549.5M1287 549.5L1315 549.5M1343 549.5L1512 549.5M1539 549.5L1567 549.5M1595 549.5L1771 549.5" stroke="rgb(165,40,175)"/></g><use href="#ol"/><use href="#ol"/><use href="#ol"/></svg><svg class="a" style="left:2px;top:4px" width="16" height="17" viewBox="0 0 16 17" shape-rendering="crispEdges"><rect x="0" y="0" width="16" height="17" fill="#1a5a8a"/><path d="M0.5 0.5H15.5V15.5H0.5Z" stroke="#c8f0ff" fill="none" stroke-width="1" /><rect x="2" y="2" width="12" height="12" fill="#2a7aa8"/><text x="3.5" y="12.5" font-size="12" font-family="Liberation Sans" fill="#e0ffff">a</text></svg><div class="a" style="left:1851px;top:2px;width:21px;height:21px;border:1px solid #fff;border-radius:3px;background:linear-gradient(135deg,#6a9cf8,#2a62e0 50%,#1e4ed0)"></div><svg class="a" style="left:1851px;top:2px" width="21" height="21" viewBox="0 0 21 21" shape-rendering="crispEdges"><rect x="5" y="13" width="8" height="3" fill="#fff"/></svg><div class="a" style="left:1874px;top:2px;width:21px;height:21px;border:1px solid #fff;border-radius:3px;background:linear-gradient(135deg,#6a9cf8,#2a62e0 50%,#1e4ed0)"></div><svg class="a" style="left:1874px;top:2px" width="21" height="21" viewBox="0 0 21 21" shape-rendering="crispEdges"><path d="M5.5 9.5H12.5V15.5H5.5Z" stroke="#fff" fill="none" stroke-width="1" /><rect x="5" y="9" width="8" height="2" fill="#fff"/><path d="M8.5 5.5H15.5V11.5" stroke="#fff" fill="none" stroke-width="1" /><rect x="8" y="5" width="8" height="2" fill="#fff"/></svg><div class="a" style="left:1897px;top:2px;width:21px;height:21px;border:1px solid #fff;border-radius:3px;background:linear-gradient(135deg,#f0a080,#e05a30 50%,#c83a10)"></div><svg class="a" style="left:1897px;top:2px" width="21" height="21" viewBox="0 0 21 21" shape-rendering="crispEdges"><path d="M5 5L15 15M15 5L5 15" stroke="#fff" fill="none" stroke-width="2" shape-rendering="auto"/></svg><svg class="a" style="left:4px;top:28px" width="16" height="16" viewBox="0 0 16 16" shape-rendering="crispEdges"><rect x="0" y="0" width="15" height="15" fill="#1a4a9a"/><path d="M7.5 1V14M1 7.5H14" stroke="#9ad0ff" fill="none" stroke-width="1" /><path d="M4.5 4.5H10.5V10.5H4.5Z" stroke="#9ad0ff" fill="#2a6ac8" stroke-width="1" /><path d="M11 15L15 11V15Z" stroke="none" fill="#ddd" stroke-width="1" /><path d="M0.5 0.5H14.5V14.5H0.5Z" stroke="#000" fill="none" stroke-width="1" /></svg><div class="a" style="left:1867px;top:27px;width:15px;height:16px;background:#ece9d8;border-right:1px solid #d6d2c2;border-bottom:1px solid #d6d2c2"></div><svg class="a" style="left:1867px;top:28px" width="14" height="14" viewBox="0 0 14 14" shape-rendering="crispEdges"><rect x="4" y="10" width="6" height="2" fill="#555"/></svg><div class="a" style="left:1885px;top:27px;width:15px;height:16px;background:#ece9d8;border-right:1px solid #d6d2c2;border-bottom:1px solid #d6d2c2"></div><svg class="a" style="left:1885px;top:28px" width="14" height="14" viewBox="0 0 14 14" shape-rendering="crispEdges"><path d="M3.5 6.5H10.5V11.5H3.5Z" stroke="#333" fill="none" stroke-width="1" /><rect x="3" y="6" width="8" height="2" fill="#333"/><path d="M5.5 3.5H12.5V8.5" stroke="#333" fill="none" stroke-width="1" /><rect x="5" y="3" width="8" height="2" fill="#2a5aa0"/></svg><div class="a" style="left:1903px;top:27px;width:15px;height:16px;background:#ece9d8;border-right:1px solid #d6d2c2;border-bottom:1px solid #d6d2c2"></div><svg class="a" style="left:1903px;top:28px" width="14" height="14" viewBox="0 0 14 14" shape-rendering="crispEdges"><path d="M3 3L11 11M11 3L3 11" stroke="#444" fill="none" stroke-width="2" shape-rendering="auto"/></svg><div class="a" style="left:1901px;top:105px;width:17px;height:882px;background:#f4f3ee;border-left:1px solid #fff"></div><div class="a" style="left:1902px;top:106px;width:15px;height:16px;border:1px solid #fff;border-radius:2px;background:linear-gradient(135deg,#d6e4fc,#b6caf6)"></div><svg class="a" style="left:1902px;top:106px" width="15" height="16" viewBox="0 0 15 16" shape-rendering="crispEdges"><path d="M4 10L7.5 6.5L11 10" stroke="#4d6185" fill="none" stroke-width="2" shape-rendering="auto"/></svg><div class="a" style="left:1902px;top:953px;width:15px;height:16px;border:1px solid #fff;border-radius:2px;background:linear-gradient(135deg,#d6e4fc,#b6caf6)"></div><svg class="a" style="left:1902px;top:953px" width="15" height="16" viewBox="0 0 15 16" shape-rendering="crispEdges"><path d="M4 5.5H11M4 7.5H11M4 9.5H11M4 11.5H11" stroke="#eef3ff" fill="none" stroke-width="1" /></svg><div class="a" style="left:1902px;top:970px;width:15px;height:16px;border:1px solid #fff;border-radius:2px;background:linear-gradient(135deg,#d6e4fc,#b6caf6)"></div><svg class="a" style="left:1902px;top:970px" width="15" height="16" viewBox="0 0 15 16" shape-rendering="crispEdges"><path d="M4 6L7.5 9.5L11 6" stroke="#4d6185" fill="none" stroke-width="2" shape-rendering="auto"/></svg><div class="a" style="left:1918px;top:45px;width:2px;height:1035px;background:#ece9d8"></div><div class="a" style="left:55px;top:987px;width:1218px;height:1px;background:#000"></div><div class="a" style="left:55px;top:988px;width:1218px;height:15px;background:#ece9d8"></div><div class="a" style="left:56px;top:988px;width:18px;height:15px;border-right:1px solid #aca899;border-bottom:1px solid #aca899;border-left:1px solid #fff"></div><svg class="a" style="left:57px;top:988px" width="16" height="15" viewBox="0 0 16 15" shape-rendering="crispEdges"><path d="M4.5 4V12" stroke="#000" fill="none" stroke-width="1" /><path d="M12 4V12L6 8Z" stroke="#000" fill="#000" stroke-width="1" /></svg><div class="a" style="left:74px;top:988px;width:18px;height:15px;border-right:1px solid #aca899;border-bottom:1px solid #aca899;border-left:1px solid #fff"></div><svg class="a" style="left:75px;top:988px" width="16" height="15" viewBox="0 0 16 15" shape-rendering="crispEdges"><path d="M11 4V12L5 8Z" stroke="#000" fill="#000" stroke-width="1" /></svg><div class="a" style="left:92px;top:988px;width:18px;height:15px;border-right:1px solid #aca899;border-bottom:1px solid #aca899;border-left:1px solid #fff"></div><svg class="a" style="left:93px;top:988px" width="16" height="15" viewBox="0 0 16 15" shape-rendering="crispEdges"><path d="M6 4V12L12 8Z" stroke="#000" fill="#000" stroke-width="1" /></svg><div class="a" style="left:110px;top:988px;width:18px;height:15px;border-right:1px solid #aca899;border-bottom:1px solid #aca899;border-left:1px solid #fff"></div><svg class="a" style="left:111px;top:988px" width="16" height="15" viewBox="0 0 16 15" shape-rendering="crispEdges"><path d="M12.5 4V12" stroke="#000" fill="none" stroke-width="1" /><path d="M5 4V12L11 8Z" stroke="#000" fill="#000" stroke-width="1" /></svg><svg class="a" style="left:120px;top:986px" width="230" height="18" viewBox="120 986 230 18" shape-rendering="auto"><path d="M260 987.5L337 987.5L332.5 1002.5H264Z" fill="#ece9d8" stroke="#000"/><path d="M182 987.5L260 987.5L255.5 1002.5H186Z" fill="#ece9d8" stroke="#000"/><path d="M120 987.5H131L135.5 1002.5H178L182 987.5" fill="#fff" stroke="none"/><path d="M131 987.5L135.5 1002.5H178L182 987.5" fill="none" stroke="#000"/></svg><div class="a" style="left:139px;top:988px;font-size:11.5px;font-weight:bold">Model</div><div class="a" style="left:192px;top:988px;font-size:11px">Rozvržení1</div><div class="a" style="left:269px;top:988px;font-size:11px">Rozvržení2</div><div class="a" style="left:1273px;top:986px;width:628px;height:17px;background:#f6f5f0"></div><div class="a" style="left:1273px;top:987px;width:5px;height:16px;background:#ece9d8;border-top:1px solid #fff;border-left:1px solid #fff;border-right:1px solid #716f64;border-bottom:1px solid #716f64"></div><div class="a" style="left:1278px;top:987px;width:18px;height:16px;background:#ece9d8;border-top:1px solid #fff;border-left:1px solid #fff;border-right:1px solid #716f64;border-bottom:1px solid #716f64"></div><svg class="a" style="left:1278px;top:987px" width="18" height="16" viewBox="0 0 18 16" shape-rendering="crispEdges"><path d="M11 4V12L6.5 8Z" stroke="#000" fill="#000" stroke-width="1" /></svg><div class="a" style="left:1296px;top:987px;width:17px;height:16px;background:#ece9d8;border-top:1px solid #fff;border-left:1px solid #fff;border-right:1px solid #716f64;border-bottom:1px solid #716f64"></div><div class="a" style="left:1885px;top:987px;width:16px;height:16px;background:#ece9d8;border-top:1px solid #fff;border-left:1px solid #fff;border-right:1px solid #716f64;border-bottom:1px solid #716f64"></div><svg class="a" style="left:1885px;top:987px" width="16" height="16" viewBox="0 0 16 16" shape-rendering="crispEdges"><path d="M6 4V12L10.5 8Z" stroke="#000" fill="#000" stroke-width="1" /></svg><div class="a" style="left:0;top:1003px;width:1920px;height:2px;background:#ece9d8"></div><div class="a" style="left:0;top:1005px;width:1920px;height:1px;background:#000"></div><div class="a" style="left:0;top:1006px;width:1920px;height:4px;background:#f4f3ee"></div><div class="a" style="left:0;top:1010px;width:1920px;height:1px;background:#000"></div><div class="a" style="left:0;top:1011px;width:1920px;height:3px;background:#ece9d8"></div><div class="a" style="left:2px;top:1014px;width:1915px;height:44px;background:#fff;border-top:2px solid #000;border-left:2px solid #222"></div><div class="a" style="left:4px;top:1041px;width:1912px;height:1px;background:#a8a8a0"></div><div class="a cmd" style="top:1016px">Příkaz:</div><div class="a cmd" style="top:1029px">Příkaz: _qsave</div><div class="a cmd" style="top:1044px">Příkaz:</div><div class="a" style="left:1901px;top:1016px;width:14px;height:11px;border:1px solid #fff;border-radius:2px;background:linear-gradient(135deg,#d6e4fc,#b6caf6)"></div><svg class="a" style="left:1901px;top:1016px" width="14" height="11" viewBox="0 0 14 11" shape-rendering="crispEdges"><path d="M4 8L7 5L10 8" stroke="#4d6185" fill="none" stroke-width="2" shape-rendering="auto"/></svg><div class="a" style="left:1901px;top:1029px;width:14px;height:11px;border:1px solid #fff;border-radius:2px;background:linear-gradient(135deg,#d6e4fc,#b6caf6)"></div><svg class="a" style="left:1901px;top:1029px" width="14" height="11" viewBox="0 0 14 11" shape-rendering="crispEdges"><path d="M4 4L7 7L10 4" stroke="#4d6185" fill="none" stroke-width="2" shape-rendering="auto"/></svg><div class="a" style="left:1830px;top:1042px;width:68px;height:15px;background:#f6f5f0"></div><div class="a" style="left:1830px;top:1042px;width:19px;height:15px;background:#ece9d8;border-top:1px solid #fff;border-left:1px solid #fff;border-right:1px solid #716f64;border-bottom:1px solid #716f64"></div><svg class="a" style="left:1830px;top:1042px" width="19" height="15" viewBox="0 0 19 15" shape-rendering="crispEdges"><path d="M10.5 4V11L7 7.5Z" stroke="#000" fill="#000" stroke-width="1" /></svg><div class="a" style="left:1849px;top:1042px;width:17px;height:15px;background:#ece9d8;border-top:1px solid #fff;border-left:1px solid #fff;border-right:1px solid #716f64;border-bottom:1px solid #716f64"></div><div class="a" style="left:1883px;top:1042px;width:15px;height:15px;background:#ece9d8;border-top:1px solid #fff;border-left:1px solid #fff;border-right:1px solid #716f64;border-bottom:1px solid #716f64"></div><svg class="a" style="left:1883px;top:1042px" width="15" height="15" viewBox="0 0 15 15" shape-rendering="crispEdges"><path d="M6 4V11L9.5 7.5Z" stroke="#000" fill="#000" stroke-width="1" /></svg><div class="a" style="left:0;top:1058px;width:1920px;height:20px;background:#ece9d8;border-bottom:0"></div><div class="a" style="left:0;top:1061px;width:1920px;height:1px;background:#d0cdbd"></div><div class="a" style="left:11px;top:1064px;width:237px;height:14px;border-top:1px solid #aca899;border-left:1px solid #aca899"></div><div class="a sb" style="left:12px;top:1067px">121.6573, 111.6131, 0.0000</div><div class="a" style="left:250px;top:1064px;width:33px;height:14px;border-right:1px solid #aca899"></div><div class="a sb" style="left:253px;top:1067px">KROK</div><div class="a" style="left:284px;top:1064px;width:42px;height:14px;border-right:1px solid #aca899"></div><div class="a sb" style="left:287px;top:1067px">RASTR</div><div class="a" style="left:328px;top:1064px;width:37px;height:14px;border-top:1px solid #000;border-left:1px solid #000"></div><div class="a sb" style="left:331px;top:1067px">ORTO</div><div class="a" style="left:366px;top:1064px;width:40px;height:14px;border-right:1px solid #aca899"></div><div class="a sb" style="left:369px;top:1067px">POLÁR</div><div class="a" style="left:408px;top:1064px;width:42px;height:14px;border-top:1px solid #000;border-left:1px solid #000"></div><div class="a sb" style="left:411px;top:1067px">UCHOP</div><div class="a" style="left:451px;top:1064px;width:40px;height:14px;border-right:1px solid #aca899"></div><div class="a sb" style="left:454px;top:1067px">OTRAS</div><div class="a" style="left:492px;top:1064px;width:29px;height:14px;border-right:1px solid #aca899"></div><div class="a sb" style="left:495px;top:1067px">TLČ</div><div class="a" style="left:521px;top:1064px;width:42px;height:14px;border-top:1px solid #000;border-left:1px solid #000"></div><div class="a sb" style="left:524px;top:1067px">MODEL</div><div class="a" style="left:0;top:1078px;width:1920px;height:2px;background:#3a80e0"></div></body></html>
